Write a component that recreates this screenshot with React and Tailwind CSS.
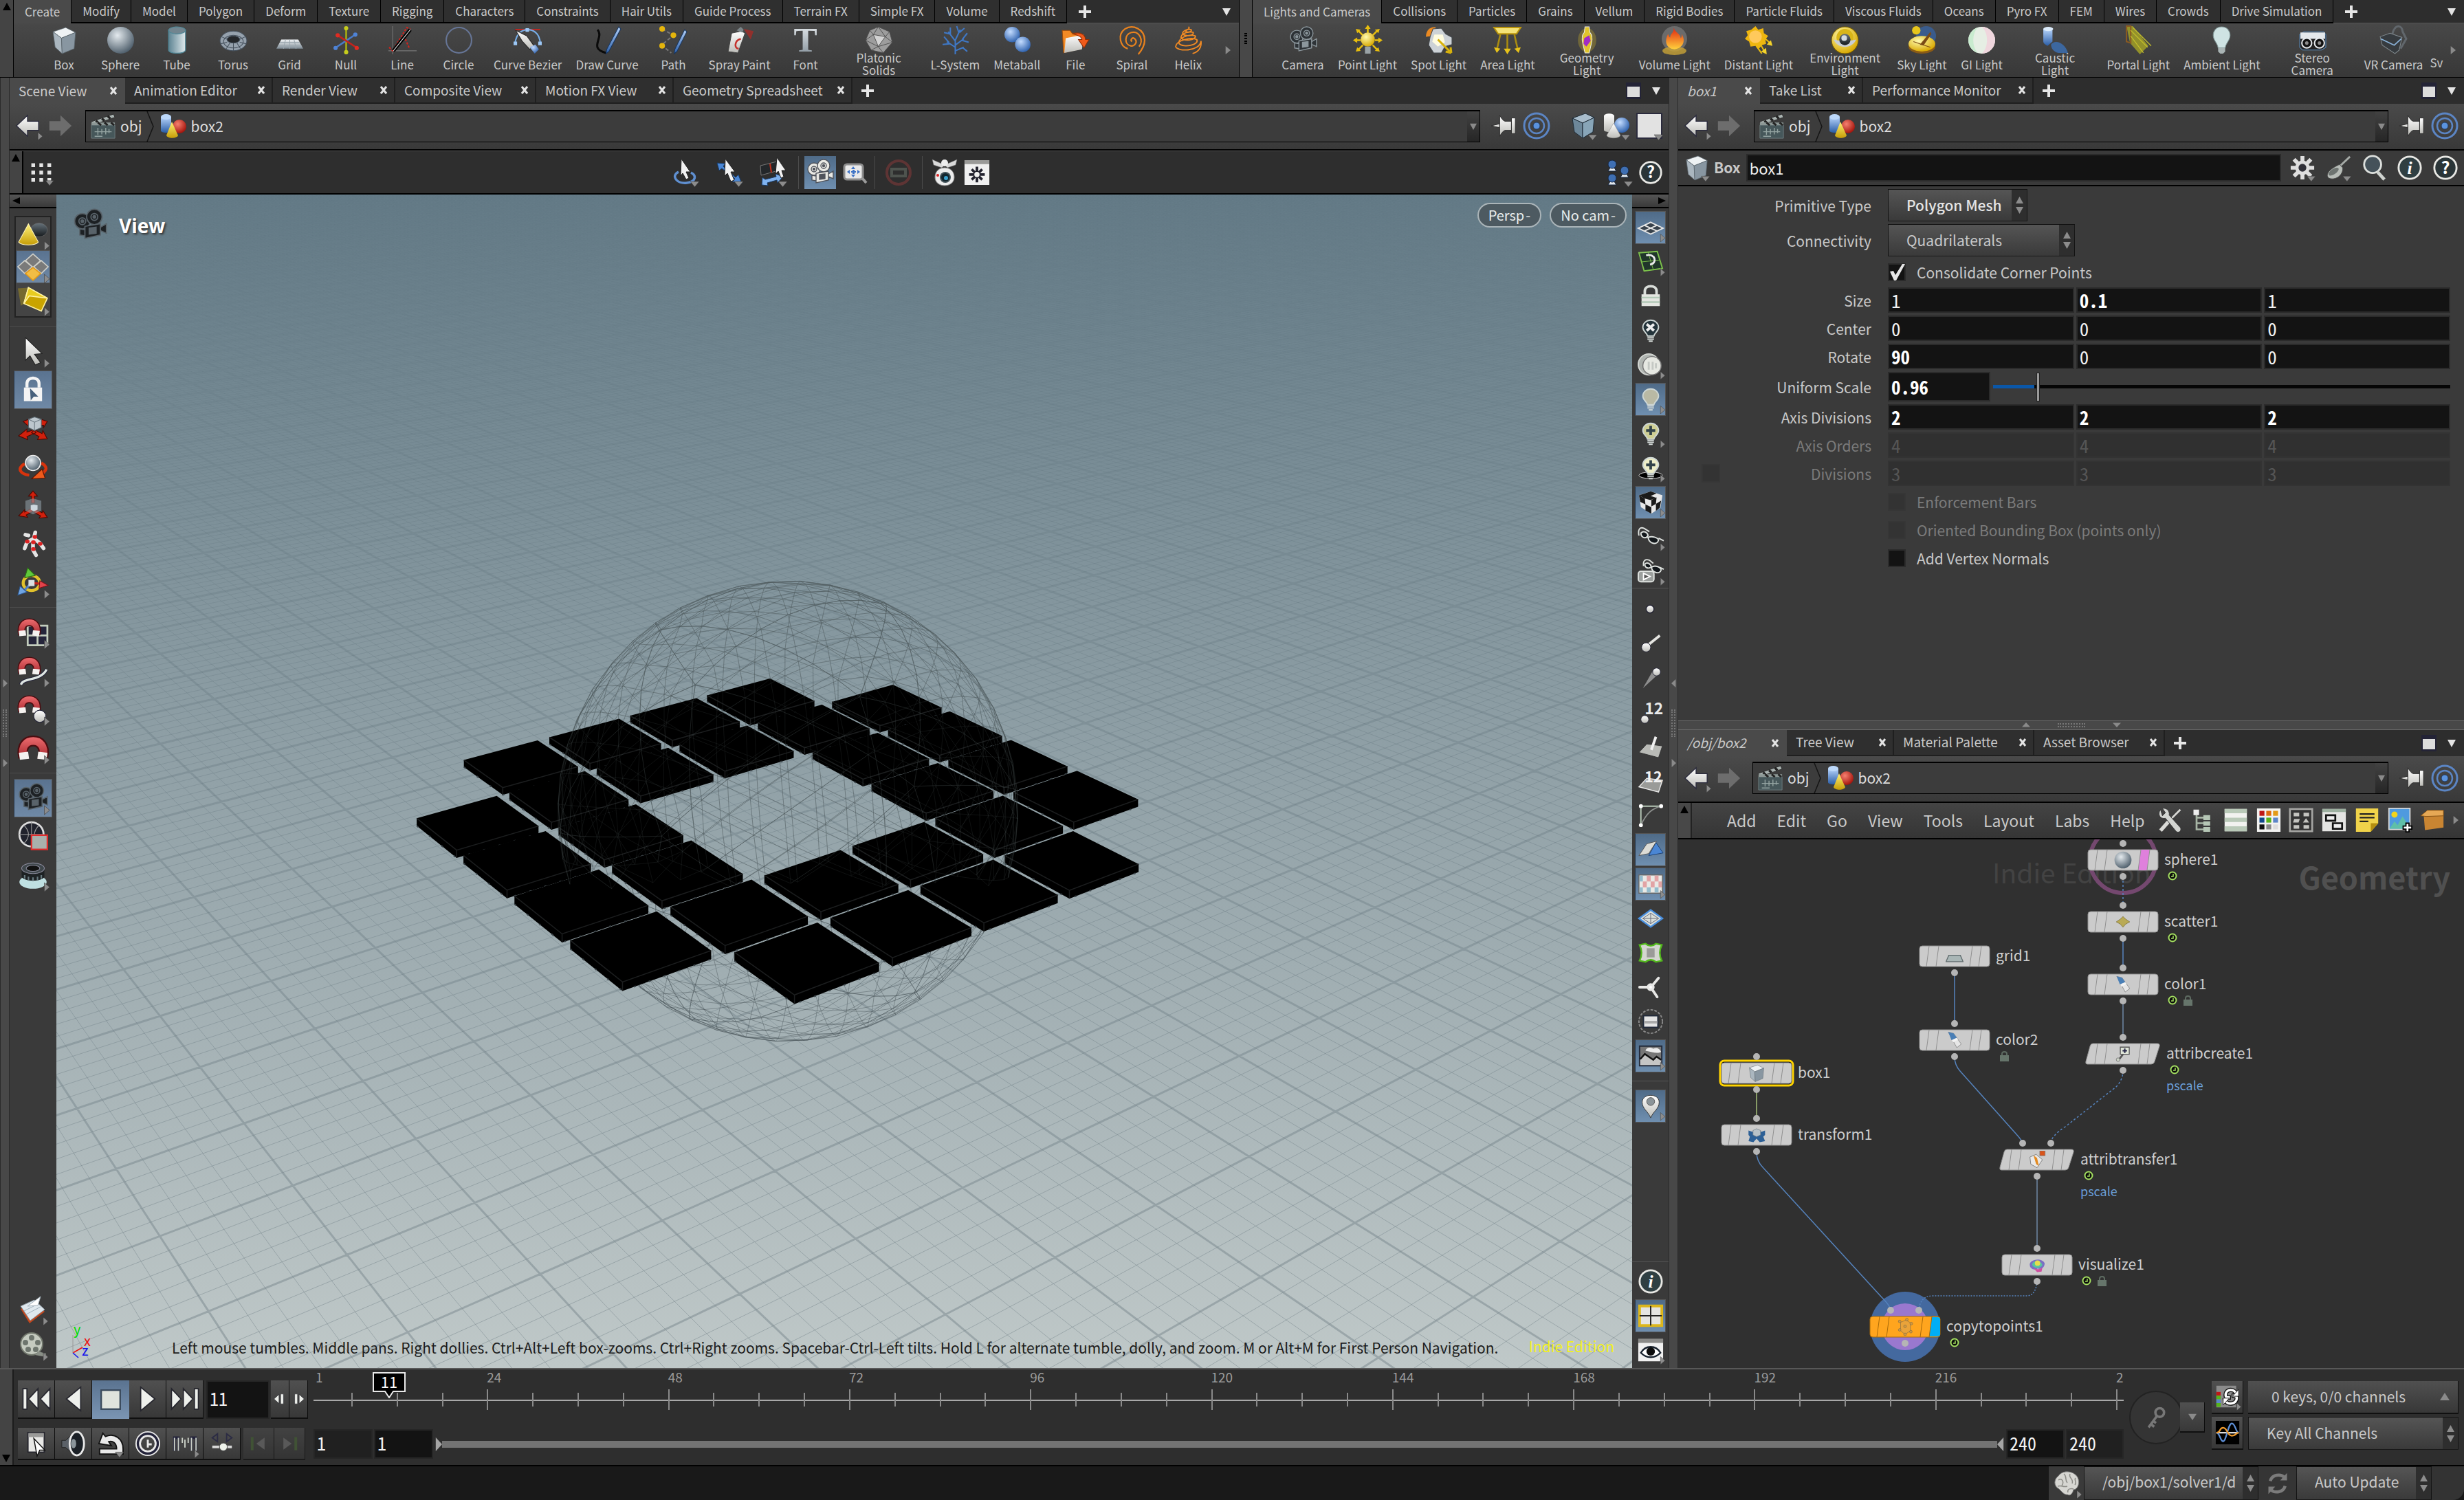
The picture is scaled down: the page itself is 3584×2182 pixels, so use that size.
import { clsx } from "clsx"

const SANS = "font-['Noto_Sans_CJK_SC','Open_Sans',sans-serif]"
const MONO = "font-['Noto_Sans_Mono_CJK_SC','Liberation_Mono',monospace]"

/* ---------- shared gradients ---------- */

function Lin({ id, from, to, x2 = 0, y2 = 1 }) {
  return (
    <linearGradient id={id} x1="0" y1="0" x2={x2} y2={y2}>
      <stop offset="0" stopColor={from} />
      <stop offset="1" stopColor={to} />
    </linearGradient>
  )
}

function Rad({ id, from, to }) {
  return (
    <radialGradient id={id} cx="0.38" cy="0.32" r="0.7">
      <stop offset="0" stopColor={from} />
      <stop offset="1" stopColor={to} />
    </radialGradient>
  )
}

function Defs() {
  return (
    <svg className="absolute size-0" aria-hidden="true">
      <defs>
        <Lin id="steel" from="#f2f5f7" to="#7d8a94" />
        <Lin id="steelH" from="#5d8392" to="#dfe9ec" x2={1} y2={0} />
        <Lin id="blueL" from="#b7d4fb" to="#2a5da6" />
        <Lin id="yellowL" from="#fff27a" to="#c79d06" />
        <Lin id="fire" from="#e2230f" to="#ffd23c" />
        <Lin id="white" from="#ffffff" to="#bdbdb8" />
        <Lin id="dark" from="#66727a" to="#15191c" />
        <Lin id="magnet" from="#ef6d70" to="#a82a30" />
        <Rad id="ball" from="#e4eaee" to="#4f5f6c" />
        <Rad id="ballBlue" from="#c3dcff" to="#2f62ae" />
        <Rad id="ballRed" from="#f58070" to="#a3130b" />
        <Rad id="ballYellow" from="#fffbb0" to="#d8a800" />
      </defs>
    </svg>
  )
}

/* ---------- icon drawings, 40 x 40 ---------- */

const bulb = (fill, inner) => (
  <g>
    <path d="M20 4c-7 0-12 5-12 11 0 6 6 8 7 13h10c1-5 7-7 7-13 0-6-5-11-12-11z" fill={fill} stroke="#cdd6d4" strokeWidth="2" />
    <path d="M15 30h10M15 33h10M17 36h6" stroke="#d8dedc" strokeWidth="2" />
    {inner}
  </g>
)

const magnet = (
  <g>
    <path
      d="M1 23C-2 9 6 2 15 2s17 7 14 21h-9c2-8 0-12-5-12s-7 4-5 12z"
      fill="url(#magnet)"
      stroke="#4a0d10"
      strokeWidth="1.5"
    />
    <path d="M1 18l9-1 1 7-9 1zM20 17l9 1-1 7-9-1z" fill="#f4f2f0" />
  </g>
)

const movieCam = (body, line) => (
  <g fill={body} stroke={line} strokeWidth="1.4">
    <circle cx="11" cy="15" r="9" />
    <circle cx="25" cy="10" r="9" />
    <circle cx="11" cy="15" r="4" />
    <circle cx="25" cy="10" r="4" />
    <circle cx="11" cy="15" r="1.5" fill={line} />
    <circle cx="25" cy="10" r="1.5" fill={line} />
    <path d="M14 21l18-3v13l-18 4zM32 22l7-4v11l-7-3zM14 25l-6-1v7l6 1z" />
    <path d="M19 23l8-1v7l-8 1z" fill={line} />
  </g>
)

const smallCube = (
  <g stroke="#59646c" strokeWidth="0.8">
    <path d="M4 8l18-6 14 7-20 8z" fill="#eef2f4" />
    <path d="M4 8l12 9 1 22L7 30z" fill="#aab6bf" />
    <path d="M16 17l20-8-2 23-17 7z" fill="#8896a1" />
  </g>
)

const arrows3 = (
  <g fill="#d1200c" stroke="#4d0903" strokeWidth="1">
    <path d="M20 1l6 7h-4v9h-4V8h-4z" />
    <path d="M1 34l8-8v3l9-5 2 4-9 5 2 3z" />
    <path d="M39 36l-11 1 2-3-9-5 2-4 9 5 1-3z" />
  </g>
)

const icons = {
  box: smallCube,
  sphere: <circle cx="20" cy="20" r="19" fill="url(#ball)" />,
  tube: (
    <g stroke="#4f8797" strokeWidth="1.2">
      <path d="M8 6v28c0 6 24 6 24 0V6z" fill="url(#steelH)" />
      <ellipse cx="20" cy="6" rx="12" ry="5" fill="#72858f" />
    </g>
  ),
  torus: (
    <g stroke="#45505c" fill="none">
      <ellipse cx="20" cy="21" rx="19" ry="14" fill="#95a1ad" />
      <ellipse cx="20" cy="22" rx="14" ry="9" />
      <path d="M3 15l9 4M37 15l-9 4M20 24v11M10 32l5-8M30 32l-5-8M2 25l9-2M38 25l-9-2" />
      <ellipse cx="20" cy="19" rx="9" ry="5" fill="#24272b" />
    </g>
  ),
  grid: (
    <g>
      <path d="M8 19h24l7 13H1z" fill="url(#steel)" />
      <path d="M6 23h28M3 28h34M14 19l-3 13M20 19v13M26 19l3 13" stroke="#9aa6ae" />
    </g>
  ),
  null: (
    <g strokeWidth="2.5">
      <path d="M20 3v34" stroke="#a8ac10" />
      <path d="M6 30L33 12" stroke="#4a7bc8" />
      <path d="M8 13l26 17" stroke="#c4231c" />
      <circle cx="20" cy="3" r="3" fill="#c6cc1d" />
      <circle cx="20" cy="37" r="3" fill="#c6cc1d" />
      <circle cx="5" cy="31" r="3" fill="#4f83d6" />
      <circle cx="33" cy="12" r="3" fill="#4f83d6" />
      <circle cx="8" cy="13" r="3" fill="#df2b22" />
      <circle cx="35" cy="31" r="3" fill="#df2b22" />
    </g>
  ),
  line: (
    <g fill="none">
      <path d="M6 0v40M0 35h40" stroke="#777" />
      <path d="M1 30l5 5L26 2l5 2M22 14l8 18" stroke="#d0231c" strokeWidth="2" strokeDasharray="3 2" />
      <path d="M7 35L31 5" stroke="#000" strokeWidth="5" />
      <path d="M7 35L31 5" stroke="#ddd" strokeWidth="1" />
    </g>
  ),
  circle: <circle cx="20" cy="20" r="18" fill="none" stroke="#667596" strokeWidth="2" />,
  bezier: (
    <g>
      <path d="M2 5h36" stroke="#d0231c" strokeWidth="1.5" />
      <path d="M2 25C4 8 14 5 20 5s17 3 18 20" fill="none" stroke="#77aee8" strokeWidth="2" />
      <path d="M3 6l16 8 10 14-6 5L12 21z" fill="url(#white)" stroke="#222" />
      <path d="M23 30l8-4 5 7-6 6z" fill="url(#ballBlue)" />
      <path d="M0 22h5v5H0zM35 22h5v5h-5zM17 3h5v5h-5z" fill="#9cc7f5" />
    </g>
  ),
  draw: (
    <g>
      <path d="M6 5c10 12-14 26 12 33" fill="none" stroke="#0a0a0a" strokeWidth="3" />
      <path d="M36 1l3 3-17 32-4 3 1-6z" fill="url(#blueL)" stroke="#16355f" />
    </g>
  ),
  path: (
    <g>
      <path d="M4 4l16 9L3 27l14 11" fill="none" stroke="#777" strokeWidth="2" strokeDasharray="5 3" />
      <circle cx="4" cy="4" r="4" fill="#e5b50c" />
      <circle cx="20" cy="13" r="4" fill="#e5b50c" />
      <circle cx="4" cy="28" r="4" fill="#e5b50c" />
      <path d="M36 5l3 3-14 28-4 3 1-6z" fill="url(#blueL)" stroke="#16355f" />
    </g>
  ),
  spray: (
    <g>
      <path d="M26 4l14 3-4 12z" fill="#c4231c" opacity="0.6" />
      <path d="M9 10l14-3 5 3-10 28-14-2z" fill="url(#white)" stroke="#444" />
      <path d="M22 18c-9 2-10 14-3 14" fill="none" stroke="#c4302b" strokeWidth="2.5" />
      <path d="M16 6l6-5 4 4-2 4z" fill="#7b8488" />
    </g>
  ),
  font: (
    <text x="20" y="36" textAnchor="middle" fontSize="50" fontWeight="bold" fill="url(#steel)" className="font-['Liberation_Serif',serif]">
      T
    </text>
  ),
  platonic: (
    <g stroke="#4c4c4c" strokeWidth="0.9">
      <path d="M19 1l16 7 4 15-13 15-17-4L1 20 7 6z" fill="#9d9d9d" />
      <path d="M12 12l17 3-10 14z" fill="#d2d2d2" />
      <path d="M19 1l-7 11L1 20l18 9 7 9M19 1l10 14 10 8-20 6-10 5M35 8l-6 7M7 6l5 6" fill="none" />
    </g>
  ),
  lsystem: (
    <path
      d="M20 40V20M20 30L8 22M20 27l12-9M20 21L10 8M20 20L27 5M12 25l-10 1M11 23L4 15M29 20l10 3M30 19l7-9M12 11L4 9M13 12l0-10M25 9l-3-9M26 9l7-6M20 35l12-5M30 30l7 6"
      fill="none"
      stroke="#3f78c6"
      strokeWidth="2"
    />
  ),
  metaball: (
    <g>
      <circle cx="13" cy="12" r="11" fill="url(#ballBlue)" />
      <circle cx="28" cy="26" r="11" fill="url(#ballBlue)" />
    </g>
  ),
  file: (
    <g>
      <path d="M1 6h11l3 4h12v22L3 38z" fill="#f28a25" stroke="#9a4a08" />
      <path d="M6 17l26-5-3 21L4 38z" fill="url(#white)" />
      <path d="M16 11c12-4 18 2 18 8h5l-7 12-8-12h5c0-4-5-6-13-8z" fill="#ef5a1b" stroke="#8f2d04" />
    </g>
  ),
  spiral: (
    <path
      d="M20 22c-3-3 1-7 4-4 5 5-1 11-6 10-9-2-9-16 1-19 12-3 18 12 11 20M14 32C3 29-1 12 10 4c11-7 28 0 28 16 0 8-4 14-9 20"
      fill="none"
      stroke="#e8821e"
      strokeWidth="2.2"
    />
  ),
  helix: (
    <path
      d="M20 1c4 3-3 4-4 6 3 4 10 0 8-2-6-2-13 3-12 6 4 4 16 3 15-2-8-3-19 3-17 8 4 5 21 3 20-3-10-4-26 4-23 11 6 6 29 2 25-6-8-4-29 1-30 10 1 7 34 8 36-8 1 9-3 15-12 18"
      fill="none"
      stroke="#f08a24"
      strokeWidth="1.8"
    />
  ),
  camera: movieCam("#2d3236", "#8b969c"),
  cameraBig: movieCam("#1d2124", "#59636a"),
  cameraLight: movieCam("#e9e9e4", "#50545c"),
  pointlight: (
    <g>
      <path d="M20 2v8M2 20h8M30 20h8M7 7l6 6M33 7l-6 6M7 33l6-6M33 33l-6-6" stroke="#e7bd0e" strokeWidth="2.5" />
      <path d="M20-2l4 6h-8zM-1 20l6-4v8zM41 20l-6-4v8zM3 4l7 1-5 5zM37 4l-7 1 5 5zM3 36l7-1-5-5zM37 36l-7-1 5-5z" fill="#e7bd0e" />
      <circle cx="20" cy="19" r="10" fill="url(#ballYellow)" />
      <path d="M16 29h8v10h-8z" fill="#9aa3a6" />
    </g>
  ),
  spotlight: (
    <g>
      <path d="M2 15C2 5 10 0 16 2l-4 12z" fill="#ea8a22" />
      <path d="M12 4l12-1 6 8 9 5v10l-10 3-5 9H13L6 27l2-12z" fill="#cdd2d6" stroke="#43484d" />
      <path d="M14 12l12 0 3 11-10 6-8-7z" fill="#fffce0" />
      <path d="M19 19l17 17M38 38l-1-8M38 38l-8-2" stroke="#d8b20c" strokeWidth="3" />
    </g>
  ),
  arealight: (
    <g>
      <path d="M1 2h38l-6 9H7z" fill="#f4e277" stroke="#b9940c" strokeWidth="2" />
      <path d="M10 12L5 34M20 12v24M30 12l5 22" stroke="#a98c10" strokeWidth="2.5" />
      <path d="M1 30l4 8 5-6zM15 32l5 8 5-8zM30 32l6 6 3-8z" fill="#e7c21a" />
    </g>
  ),
  geolight: (
    <g>
      <ellipse cx="20" cy="20" rx="13" ry="17" fill="#8d7f35" opacity="0.6" />
      <path d="M17 1h6l1 8c5 5 3 12 2 16l-3 13h-6l-3-13c-1-4-3-11 2-16z" fill="#e0c42c" stroke="#ececec" />
      <path d="M16 17l7-4 2 8-6 8-4-4z" fill="#a12cc4" />
    </g>
  ),
  fire: (
    <g>
      <circle cx="20" cy="18" r="18" fill="#6b6b6b" />
      <ellipse cx="20" cy="35" rx="17" ry="6" fill="#c9a437" opacity="0.8" />
      <path d="M19 2c2 8 9 8 10 15 1-1 2-3 1-6 6 8 4 20-10 22C7 31 6 21 11 11c1 3 2 5 3 5 0-6 6-6 5-14z" fill="url(#fire)" />
    </g>
  ),
  distant: (
    <g>
      <path d="M16 0l4 5 7-2 1 7 6 4-4 5 1 6-6 2-4 5-5-4-7 1-2-7-6-4 4-5-2-6 7-2z" fill="#efb60f" />
      <circle cx="16" cy="15" r="9" fill="#ffc95c" />
      <path d="M29 17l10 9M22 24l8 14M17 28l8 11" stroke="#e9bb10" strokeWidth="2" />
      <path d="M40 28l-8-2 6-6zM32 40l-8-4 7-5z" fill="#f3d22b" />
    </g>
  ),
  environment: (
    <g>
      <circle cx="20" cy="20" r="19" fill="url(#ballYellow)" stroke="#745c04" />
      <circle cx="20" cy="16" r="12" fill="#d8b518" />
      <path d="M4 19c6 14 26 14 32 0l-10 2H14z" fill="#c9ced3" />
      <circle cx="20" cy="19" r="8" fill="url(#dark)" />
      <circle cx="19" cy="17" r="4" fill="#d3dbe0" />
    </g>
  ),
  sky: (
    <g>
      <circle cx="26" cy="14" r="14" fill="#37629f" opacity="0.8" />
      <circle cx="12" cy="6" r="6" fill="#e7c51c" />
      <ellipse cx="20" cy="29" rx="19" ry="10" fill="#8a5b16" />
      <ellipse cx="20" cy="25" rx="19" ry="11" fill="url(#ballYellow)" />
      <path d="M18 26L32 9l1 2-11 16zM8 22l12 4 12 4" fill="#7a4a15" stroke="#7a4a15" />
    </g>
  ),
  gi: (
    <g>
      <circle cx="20" cy="20" r="19" fill="#e6eee4" />
      <path d="M20 1a19 19 0 010 38c10-8 10-30 0-38z" fill="#efd6dd" />
      <path d="M14 2a19 19 0 000 36c-8-10-8-26 0-36z" fill="#c9ebcf" />
    </g>
  ),
  caustic: (
    <g>
      <path d="M14 26c6-8 20-2 24 12H24c-6-2-10-6-10-12z" fill="#3b78c8" opacity="0.7" />
      <path d="M3 4v18c0 3 4 5 6 6l7-6V4z" fill="url(#blueL)" />
      <ellipse cx="10" cy="4" rx="7" ry="3" fill="#dcebfb" />
    </g>
  ),
  portal: (
    <g>
      <path d="M3 0h9l22 28-12 12-14-16z" fill="#93912a" />
      <path d="M3 0v22l6 2V0z" fill="none" stroke="#8a5a22" strokeWidth="2" />
      <path d="M9 6l24 24M9 14l18 24M12 2l26 26" stroke="#c6c02c" strokeWidth="1.2" />
    </g>
  ),
  ambient: (
    <g>
      <path d="M20 1C12 1 8 7 8 13c0 8 6 10 7 18h10c1-8 7-10 7-18 0-6-4-12-12-12z" fill="#cfe3e3" stroke="#7d9292" />
      <path d="M15 31h10v5l-3 3h-4l-3-3z" fill="#a9b4b4" />
    </g>
  ),
  stereo: (
    <g>
      <path d="M2 12l6-4h28l3 4v18l-6 4H6l-4-4z" fill="#222" stroke="#5b8fc0" />
      <path d="M3 9h35v9H3z" fill="#e4e8eb" />
      <circle cx="12" cy="24" r="7" fill="#111" stroke="#e4e8eb" strokeWidth="2" />
      <circle cx="30" cy="24" r="7" fill="#111" stroke="#e4e8eb" strokeWidth="2" />
      <circle cx="12" cy="24" r="2.5" fill="#8b8b8b" />
      <circle cx="30" cy="24" r="2.5" fill="#8b8b8b" />
    </g>
  ),
  vr: (
    <g>
      <path d="M18 12C22-4 32-2 33 8l5 10-8 14" fill="none" stroke="#61676c" strokeWidth="3" />
      <path d="M1 15l14-5 17 6-4 18-6 5L4 27z" fill="#363b3f" stroke="#828b90" />
      <path d="M2 18l19 9 10-9" fill="none" stroke="#8ab3da" strokeWidth="1.6" />
    </g>
  ),

  /* path bar */
  back: <path d="M2 20L19 4v9h17v14H19v9z" fill="url(#white)" stroke="#2a2a3c" strokeWidth="1.5" />,
  forward: <path d="M38 20L21 4v9H4v14h17v9z" fill="#6d6d6d" />,
  clapper: (
    <g>
      <path d="M1 13L36 1l2 5L6 17z" fill="#aab3b1" stroke="#2b2b2b" />
      <path d="M9 11l4 4M18 8l4 3M27 4l4 4" stroke="#222" strokeWidth="3.5" />
      <path d="M2 18h36v20H2z" fill="#46575a" stroke="#6d7b7d" />
      <path d="M2 14h36v4H2z" fill="#8d9896" />
      <path d="M12 14l5 4M22 14l5 4M32 14l5 4" stroke="#222" strokeWidth="3" />
      <path d="M7 28h26M12 22v11M18 24v8M24 22v10M29 24v6M7 35h12" stroke="#93a3a1" strokeWidth="1.5" />
    </g>
  ),
  geo: (
    <g>
      <path d="M2 6v20c0 4 15 4 15 0V6z" fill="url(#blueL)" />
      <ellipse cx="9.500" cy="6" rx="7.500" ry="4" fill="#bcd8fa" />
      <circle cx="29" cy="20" r="10" fill="url(#ballRed)" />
      <path d="M18 13l9 20c-2 5-15 5-17 0z" fill="url(#yellowL)" />
    </g>
  ),
  pin: (
    <g fill="url(#white)" stroke="#2a2a2a">
      <path d="M0 20l13-3v6z" />
      <path d="M13 4c3 5 5 8 8 9h10v14H21c-3 1-5 4-8 9z" />
      <path d="M31 8h6v24h-6z" />
    </g>
  ),
  target: (
    <g fill="none" stroke="#5b85c4">
      <circle cx="20" cy="20" r="18" strokeWidth="3" />
      <circle cx="20" cy="20" r="11" strokeWidth="2.5" />
      <circle cx="20" cy="20" r="5" fill="#5b93dd" stroke="#1f3a63" />
    </g>
  ),
  cubeBlue: (
    <g stroke="#1e2b36">
      <path d="M4 9l19-7 13 6-17 8z" fill="#a8bccb" />
      <path d="M4 9l15 7v22L7 29z" fill="#6d8799" />
      <path d="M19 16l17-8-2 21-15 9z" fill="#88a5b8" />
    </g>
  ),
  shapes: (
    <g>
      <path d="M2 6v20c0 4 15 4 15 0V6c0-5-15-5-15 0z" fill="url(#white)" />
      <circle cx="28" cy="19" r="11" fill="url(#ballBlue)" />
      <path d="M16 16l10 18c-2 5-18 5-20 0z" fill="url(#white)" stroke="#888" strokeWidth="0.5" />
    </g>
  ),
  whiteRect: <rect x="2" y="2" width="36" height="36" fill="#e2e2e2" stroke="#2a2a3c" strokeWidth="2" />,

  /* viewport toolbar */
  dots9: <path d="M4 5h6v6H4zM17 5h6v6h-6zM30 5h6v6h-6zM4 17h6v6H4zM17 17h6v6h-6zM30 17h6v6h-6zM4 29h6v6H4zM17 29h6v6h-6zM30 29h6v6h-6z" fill="#e4e4e4" />,
  orbit: (
    <g>
      <path d="M10 19c-12 6-2 18 12 16 14-2 14-11 6-15" fill="none" stroke="#5f8fd0" strokeWidth="3.500" />
      <path d="M14 0l13 19h-6l4 9-4 2-5-9-3 4z" fill="#f2f2f2" stroke="#222" />
    </g>
  ),
  pan: (
    <g>
      <path d="M2 6l12 1-3 4 18 16 4-4 5 13-14-3 4-4L9 14l-4 3z" fill="#4a86d4" stroke="#173a66" />
      <path d="M14 0l14 19h-6l5 12-5 2-5-12-4 4z" fill="#f2f2f2" stroke="#222" />
    </g>
  ),
  dolly: (
    <g>
      <path d="M1 10l24-6 2 13L2 24z" fill="#23272a" stroke="#777" />
      <path d="M15 7l2 13" stroke="#c0301c" strokeWidth="2" />
      <path d="M3 38l1-11 4 3 16-4-1-4 11 4-8 9-1-4-14 4 1 4z" fill="#7fb2ef" stroke="#173a66" />
      <path d="M25-2l13 19h-6l3 9-4 2-4-10-4 4z" fill="#f2f2f2" stroke="#222" />
    </g>
  ),
  region: (
    <g>
      <rect x="4" y="8" width="27" height="22" rx="4" fill="#e9e9e9" stroke="#8d8d8d" strokeWidth="3" />
      <path d="M17 11l3 4h-6zM17 27l3-4h-6zM8 19l4-3v6zM27 19l-4-3v6zM14 18h7v2h-7zM16 16h3v6h-3z" fill="#3f74c6" />
      <path d="M30 28l6 7" stroke="#9a9a9a" strokeWidth="4" />
    </g>
  ),
  forbidden: (
    <g fill="none">
      <circle cx="20" cy="20" r="17" stroke="#5e3434" strokeWidth="4" />
      <rect x="10" y="15" width="20" height="10" stroke="#4e534e" strokeWidth="4" />
    </g>
  ),
  bug: (
    <g>
      <path d="M20 9L2 1l2 8 12 4zM20 9l18-8-2 8-12 4z" fill="#d9d9d9" stroke="#666" strokeWidth="0.500" />
      <circle cx="20" cy="6" r="5" fill="#eee" />
      <path d="M20 13C10 13 6 20 6 27c0 7 6 12 14 12s14-5 14-12c0-7-4-14-14-14z" fill="#ececec" stroke="#888" />
      <circle cx="21" cy="27" r="8" fill="#44545a" />
      <circle cx="21" cy="27" r="6" fill="#12262e" />
      <circle cx="22" cy="28" r="3" fill="#3aa0cc" />
      <circle cx="10" cy="24" r="2" fill="#d22" />
    </g>
  ),
  gearSheet: (
    <g>
      <path d="M1 1h38v38H1z" fill="#f0f0f0" />
      <path d="M1 1h38v6H1z" fill="#9a9a98" />
      <path d="M20 11v24M8 23h24M12 15l16 16M28 15L12 31" stroke="#20202c" strokeWidth="4" />
      <circle cx="20" cy="23" r="4" fill="#f0f0f0" />
    </g>
  ),
  users: (
    <g fill="#3f6fb2" stroke="#16263f">
      <path d="M4 18l3-5h6l3 5zM4 38l3-5h6l3 5zM22 27l3-5h6l3 5z" fill="#e4e9ee" />
      <circle cx="10" cy="8" r="6" />
      <circle cx="10" cy="28" r="6" />
      <circle cx="28" cy="17" r="6" />
    </g>
  ),
  help: (
    <g>
      <circle cx="20" cy="20" r="17" fill="#2a3538" stroke="#e8e8e4" strokeWidth="3" />
      <text x="20" y="29" textAnchor="middle" fontSize="26" fontWeight="bold" fill="#fff">?</text>
    </g>
  ),
  info: (
    <g>
      <circle cx="20" cy="20" r="17" fill="#2f3f42" stroke="#e8e8e4" strokeWidth="3" />
      <text x="20" y="29" textAnchor="middle" fontSize="27" fontWeight="bold" fontStyle="italic" fill="#fff" className="font-['Liberation_Serif',serif]">i</text>
    </g>
  ),

  /* left tools */
  objSelect: (
    <g>
      <ellipse cx="28" cy="15" rx="11" ry="9" fill="url(#dark)" stroke="#777" strokeWidth="0.500" />
      <path d="M14 7l13 24c-4 5-22 5-26 0z" fill="url(#yellowL)" stroke="#fff3b8" />
    </g>
  ),
  primSelect: (
    <g stroke="#cfcfc8" strokeWidth="1.5">
      <path d="M20 3l10 9-10 9-10-9z" fill="#7a7a7a" />
      <path d="M9 12l10 8-10 9-9-9z" fill="#7a7a7a" />
      <path d="M31 12l9 8-9 9-10-9z" fill="#7a7a7a" />
      <path d="M20 21l10 8-10 9-10-9z" fill="#f2bd45" stroke="#e39a18" />
    </g>
  ),
  cubeYellow: (
    <g>
      <path d="M0 5l14-1-4 20-6 4z" fill="#a8901a" opacity="0.5" />
      <path d="M14 4l25 14-8 17L8 25z" fill="#c9a400" stroke="#fff2a0" strokeWidth="1.500" />
      <path d="M14 4l25 14-24-3-7 10z" fill="#e8cc20" stroke="#fff2a0" strokeWidth="1.500" />
    </g>
  ),
  cursor: <path d="M10 2l22 21-10 1 8 11-7 3-7-12-6 6z" fill="url(#white)" stroke="#222" />,
  secure: (
    <g>
      <path d="M12 17v-5c0-10 16-10 16 0v5" fill="none" stroke="#f4f4f4" strokeWidth="4" />
      <path d="M8 17h24v18H8z" fill="#f4f4f4" />
      <path d="M16 18l11 11h-6l-4 5z" fill="#46607c" />
    </g>
  ),
  move: (
    <g>
      <path d="M1 30l11-9v4l9-3 3 4-12 5 1 4zM39 34l-13 1 2-4-10-5 4-4 10 5 1-4zM7 11l10-4v3l5-1v5l-7 1v3zM39 11l-9-3v3l-4 1 2 4 6 0v3z" fill="#d1200c" stroke="#4d0903" />
      <path d="M14 8l8-3 9 3v11l-9 4-8-4z" fill="#bcc6cd" stroke="#56636b" />
      <path d="M14 8l8 4 9-4M22 12v11" stroke="#6d7a83" fill="none" />
    </g>
  ),
  rotate: (
    <g>
      <path d="M9 16c-12 7-4 14 6 15M31 15c9 5 7 10 1 14" fill="none" stroke="#d8330c" strokeWidth="4" />
      <path d="M18 36l14-13 4 12z" fill="#ef5a1b" stroke="#5c1300" />
      <circle cx="20" cy="15" r="10" fill="url(#ball)" stroke="#eee" strokeWidth="1.5" />
    </g>
  ),
  scale: (
    <g>
      {arrows3}
      <path d="M10 14l10-3 11 3v13l-11 5-10-5z" fill="#8c9aa2" opacity="0.6" />
      <path d="M17 20l4-1 5 1v6l-5 2-4-2z" fill="#cdd7dd" />
    </g>
  ),
  pose: (
    <g stroke="#e4e4e4" strokeWidth="5" strokeLinecap="round">
      <path d="M10 8l4 1M23 5l-2 8 8 6 5 7M21 13l-9 5-3 8M20 20l0 8 4 7" fill="none" />
      <path d="M22 11h1M12 17h1M20 18h1M29 20h1M20 27h1" stroke="#d22" />
    </g>
  ),
  handles: (
    <g>
      <ellipse cx="18" cy="21" rx="11" ry="10" fill="none" stroke="#e1c12c" strokeWidth="4" />
      <path d="M18 21L9 30" stroke="#5580c0" strokeWidth="3" />
      <path d="M18 21l12 1" stroke="#c4231c" strokeWidth="3" />
      <path d="M13 1l10 10-14 3z" fill="#5fc93a" stroke="#2c6d16" />
      <path d="M0 37l3-12 9 8z" fill="#6fa5e4" stroke="#2c558c" />
      <path d="M40 24l-11-6-1 10z" fill="#e2434b" stroke="#7c1218" />
      <path d="M14 17h8v8h-8z" fill="#d9dfe2" />
    </g>
  ),
  snapGrid: (
    <g>
      <path d="M13 11h26v26H13zM26 11v26M13 24h26" fill="#25253a" stroke="#c3cdbd" strokeWidth="2.5" />
      {magnet}
    </g>
  ),
  snapCurve: (
    <g>
      {magnet}
      <path d="M4 38c4-10 26-4 34-20" fill="none" stroke="#25253a" strokeWidth="5" />
      <path d="M4 38c4-10 26-4 34-20" fill="none" stroke="#dfe6e2" strokeWidth="3" />
    </g>
  ),
  snapPoint: (
    <g>
      {magnet}
      <circle cx="29" cy="29" r="8" fill="url(#white)" stroke="#25253a" />
    </g>
  ),
  snap: <g transform="translate(0 2) scale(1.35)">{magnet}</g>,
  globe: (
    <g>
      <circle cx="18" cy="17" r="16" fill="#20222c" stroke="#ddd" strokeWidth="2.5" />
      <path d="M2 17h32M18 1v32M8 5c8 8 8 16 0 24M28 5c-8 8-8 16 0 24" fill="none" stroke="#999" />
      <path d="M18 18h21v19H18z" fill="#a9b0ac" stroke="#e02d2d" strokeWidth="2" />
    </g>
  ),
  lens: (
    <g>
      <ellipse cx="20" cy="29" rx="18" ry="9" fill="#bfe0e2" />
      <path d="M5 12v10c2 7 28 7 30 0V12z" fill="#1d2123" />
      <ellipse cx="20" cy="11" rx="15" ry="7" fill="#3f474b" stroke="#889" />
      <ellipse cx="20" cy="11" rx="9" ry="4" fill="#111" stroke="#889" />
      <path d="M9 20v5M14 22v5M20 23v5M26 22v5M31 20v5" stroke="#66787e" strokeWidth="2" />
    </g>
  ),
  book: (
    <g>
      <path d="M2 18l20-10 15 14-22 17z" fill="#c4461b" />
      <path d="M2 14l20-9 15 14-21 16z" fill="#dfe8ee" stroke="#8a969e" />
      <path d="M7 21l20-10M10 26l21-11" stroke="#9fb0bb" />
      <path d="M12 14L31 0l-4 13z" fill="#fff" stroke="#a5b3bd" />
    </g>
  ),
  reel: (
    <g>
      <circle cx="18" cy="17" r="16" fill="#c5cbc0" stroke="#70766b" strokeWidth="2" />
      <path d="M28 28l11 3v5l-16-3z" fill="#8a9087" />
      <g fill="#6d756d">
        <circle cx="18" cy="8" r="4" />
        <circle cx="9" cy="15" r="4" />
        <circle cx="27" cy="15" r="4" />
        <circle cx="13" cy="25" r="4" />
        <circle cx="24" cy="25" r="4" />
      </g>
    </g>
  ),

  /* display options */
  plane: (
    <g stroke="#e6e6e6" strokeWidth="2" fill="#38424c">
      <path d="M20 12l19 9-19 9L1 21z" />
      <path d="M10 16.500l20 9M30 16.500l-20 9" />
    </g>
  ),
  planeC: (
    <g fill="none">
      <path d="M2 6l28-2 8 26-28 4z" fill="#20362a" stroke="#7cc24b" strokeWidth="2" />
      <path d="M16 5l8 27M6 20l28-3" stroke="#7cc24b" />
      <path d="M13 10c14-4 18 12 6 14" stroke="#e9e9e9" strokeWidth="3" />
    </g>
  ),
  lock: (
    <g>
      <path d="M11 18v-6c0-10 18-10 18 0v6" fill="none" stroke="#d9ddd9" strokeWidth="4" />
      <path d="M6 17h28v18H6z" fill="#e4e6e1" />
      <path d="M6 22h28M6 29h28" stroke="#b3c9b8" strokeWidth="2.5" />
    </g>
  ),
  bulbX: bulb("#23333a", <path d="M14 10l11 10M25 10L14 20" stroke="#eee" strokeWidth="4" />),
  headlight: (
    <g>
      <circle cx="17" cy="19" r="16" fill="#b0b5b1" stroke="#d5d8d4" strokeWidth="2" />
      <circle cx="22" cy="21" r="14" fill="#e6e8e2" stroke="#777" strokeWidth="1.500" />
      <path d="M17 15v12M23 15v12M28 17v8" stroke="#c4c8c3" strokeWidth="3" />
    </g>
  ),
  bulb: bulb("#b9b9a4"),
  bulbPlus: bulb("#cfcf94", <path d="M20 8v14M13 15h14" stroke="#33434a" strokeWidth="4" />),
  bulbFloor: (
    <g>
      <ellipse cx="20" cy="31" rx="18" ry="5" fill="#000" stroke="#ddd" />
      {bulb("#eeeec8", <path d="M20 8v14M13 15h14" stroke="#33434a" strokeWidth="4" />)}
    </g>
  ),
  checker: (
    <g>
      <path d="M2 9l18-6 18 6-3 19-14 9L5 27z" fill="#e8e8e8" />
      <path d="M2 9l9-3 9 4-9 4zM20 3l9 3-9 4-9-4zM29 13l-9 3-1 0-8-2 9-4z" fill="#1a1a1a" />
      <path d="M2 9l9 5 1 9-8-4zM12 23l9 4v10l-9-5zM21 16l8-4-1 10-7 4zM28 22l8-5-2 11-6 5z" fill="#1a1a1a" />
    </g>
  ),
  glasses: (
    <g fill="none" stroke="#dfe3e0" strokeWidth="2">
      <path d="M2 18C0 8 4 4 10 7l8 5M32 22l8 4" />
      <path d="M5 14c4-4 10-1 11 4-4 6-11 3-11-4zM16 21c6-3 15 0 16 4-2 8-14 6-16-4z" fill="#12171b" />
    </g>
  ),
  glassesPlay: (
    <g fill="none" stroke="#dfe3e0" strokeWidth="2">
      <rect x="1" y="20" width="24" height="16" rx="4" fill="#9b9f9d" />
      <path d="M9 23l10 5-10 5z" fill="#555" stroke="#fff" />
      <path d="M9 12C8 3 12 1 18 3l6 5M34 14l6 3" />
      <path d="M11 9c4-4 9 0 10 4-4 4-10 2-10-4zM21 14c5-4 14-1 15 4-2 7-13 5-15-4z" fill="#12171b" />
    </g>
  ),
  dot: <circle cx="19" cy="20" r="6" fill="url(#white)" stroke="#223" strokeWidth="1.5" />,
  pointNormal: (
    <g>
      <path d="M14 24L34 8" stroke="#e6e6e2" strokeWidth="4" />
      <circle cx="13" cy="26" r="7" fill="url(#white)" stroke="#223" />
    </g>
  ),
  trail: (
    <g>
      <path d="M8 36L24 8l8 6z" fill="#8f8f8f" />
      <circle cx="29" cy="11" r="6" fill="url(#white)" stroke="#223" />
    </g>
  ),
  pointNum: (
    <g>
      <circle cx="11" cy="31" r="6" fill="url(#white)" stroke="#223" />
      <text x="25" y="23" textAnchor="middle" fontSize="24" fontWeight="bold" fill="#e9e9e9">12</text>
    </g>
  ),
  primNormal: (
    <g>
      <path d="M14 16l24 3-6 18L2 29z" fill="#b9bab6" stroke="#333" />
      <path d="M21 25L28 5" stroke="#f0f0f0" strokeWidth="4" />
    </g>
  ),
  primNum: (
    <g>
      <path d="M14 16l24 3-6 18L2 29z" fill="#9a9b98" stroke="#e8e8e8" strokeWidth="1.5" />
      <text x="24" y="22" textAnchor="middle" fontSize="23" fontWeight="bold" fill="#f2f2f2">12</text>
    </g>
  ),
  hull: (
    <g fill="none" strokeWidth="2">
      <path d="M5 35V6h31" stroke="#b8c9b8" />
      <path d="M5 35C14 16 22 10 36 6" stroke="#8c8f8d" />
      <circle cx="5" cy="6" r="3" fill="#fff" />
      <circle cx="36" cy="6" r="3" fill="#fff" />
      <circle cx="5" cy="35" r="3" fill="#fff" />
    </g>
  ),
  ghost: (
    <g>
      <path d="M17 29l11-20 11 16z" fill="#4a86d4" stroke="#1a3f73" />
      <path d="M2 29L14 11l15-4-12 19z" fill="#dcdcd6" stroke="#555" />
    </g>
  ),
  uv: (
    <g>
      <path d="M2 6h36v28H2z" fill="#e9e9e6" stroke="#666" strokeWidth="1.5" />
      <path d="M14 7h6v9h-6zM26 7h6v9h-6zM8 16h6v9H8zM20 16h6v9h-6zM32 16h5v9h-5z" fill="#e2a3a5" />
      <path d="M3 7h5v9H3zM14 25h6v8h-6zM3 25h5v8H3zM26 25h6v8h-6z" fill="#94bccd" />
    </g>
  ),
  diamond: (
    <g>
      <path d="M20 7l18 13-18 13L2 20z" fill="#dadfda" stroke="#4a90e0" strokeWidth="2.5" />
      <path d="M8 20l12-8 12 8-12 8zM20 12v16M8 20h24" fill="none" stroke="#667" />
    </g>
  ),
  green: (
    <g>
      <path d="M3 8l9-2c5 4 11 4 16 0l9 2c-4 8-4 16 0 24l-9 2c-5-4-11-4-16 0l-9-2c4-8 4-16 0-24z" fill="#d4d6d0" stroke="#52b81c" strokeWidth="2.500" />
      <path d="M14 13h12v14H14z" fill="#9a9a98" />
    </g>
  ),
  tripod: (
    <g stroke="#e8e8e6" strokeWidth="4" strokeLinecap="round">
      <path d="M19 20H3M22 18l10-12M22 23l8 12" />
      <circle cx="20" cy="20" r="4" fill="#fff" />
    </g>
  ),
  overlay: (
    <g>
      <circle cx="20" cy="20" r="18" fill="none" stroke="#8a8a8a" strokeWidth="2" strokeDasharray="4 2" />
      <path d="M9 11h22v18H9z" fill="#e4e4e4" stroke="#222a3a" strokeWidth="2" />
      <path d="M10 19h20v4H10z" fill="#a9a9a9" />
    </g>
  ),
  landscape: (
    <g>
      <path d="M3 5h34v30H3z" fill="#777" stroke="#222a3a" strokeWidth="2" />
      <path d="M12 12c2-6 9-5 12-3 6-3 10 0 12 5-6 3-14 0-24-2z" fill="#ececec" />
      <path d="M4 25l7-8 13 9 5-5 7 5v8H4z" fill="#c5c5c5" />
      <path d="M4 25l7-8 13 9 5-5 7 5" fill="none" stroke="#111" strokeWidth="2.500" />
    </g>
  ),
  marker: (
    <g>
      <path d="M20 38C16 28 7 24 7 14 7 0 33 0 33 14c0 10-9 14-13 24z" fill="url(#white)" stroke="#333" />
      <circle cx="20" cy="13" r="6" fill="#8b9499" stroke="#555" />
    </g>
  ),
  quad: (
    <g>
      <path d="M3 5h34v30H3z" fill="#e4e4e2" stroke="#dcb61c" strokeWidth="4" />
      <path d="M20 5v30M3 20h34" stroke="#222" strokeWidth="2" />
    </g>
  ),
  eye: (
    <g>
      <path d="M1 3h38v34H1z" fill="#f0f0f0" />
      <path d="M1 3h38v6H1z" fill="#8a8a88" />
      <path d="M5 24c7-12 23-12 30 0-8 9-22 9-30 0z" fill="#fff" stroke="#16202c" strokeWidth="2.500" />
      <circle cx="20" cy="22" r="6.500" fill="#0c0c0c" />
    </g>
  ),

  /* parameter header */
  gear: (
    <g>
      <path d="M20 2v36M2 20h36M7 7l26 26M33 7L7 33" stroke="#dedede" strokeWidth="6" />
      <circle cx="20" cy="20" r="11" fill="#dedede" />
      <circle cx="20" cy="20" r="6" fill="#303038" />
    </g>
  ),
  brush: (
    <g>
      <path d="M20 20L38 3" stroke="#a5aaa6" strokeWidth="3" />
      <path d="M22 15l5 5c1 12-12 20-21 16-6-4-2-13 16-21z" fill="#b8bdb8" stroke="#444" />
      <ellipse cx="13" cy="26" rx="9" ry="4" transform="rotate(-35 13 26)" fill="#6e7471" />
    </g>
  ),
  search: (
    <g>
      <circle cx="18" cy="15" r="13" fill="#45525a" stroke="#dcdfdc" strokeWidth="3" />
      <path d="M25 26l11 12" stroke="#cfd3cf" strokeWidth="5" />
    </g>
  ),

  /* network menu */
  tools: (
    <g>
      <path d="M4 37l15-17" stroke="#d9d9d6" strokeWidth="6" />
      <path d="M18 21L36 3" stroke="#d9d9d6" strokeWidth="3" />
      <path d="M4 3c-6 8 0 16 8 14l17 21c4 4 10-1 7-6L18 12c1-8-5-12-11-11l5 7-5 5z" fill="#d2d4d1" stroke="#333" />
    </g>
  ),
  tree: (
    <g>
      <path d="M10 12v23h12M10 16h12M10 25h12" fill="none" stroke="#a7b5a5" strokeWidth="3" />
      <path d="M5 3h9v9H5z" fill="#eee" />
      <path d="M21 12h11v8H21zM21 22h11v7H21zM21 31h11v8H21z" fill="#b5c6b5" />
    </g>
  ),
  list: (
    <g>
      <path d="M2 2h36v36H2z" fill="#f2f2f0" />
      <path d="M2 2h36v7H2zM2 16h36v7H2zM2 30h36v8H2z" fill="#b9c9b8" />
    </g>
  ),
  palette: (
    <g>
      <path d="M1 1h38v38H1z" fill="#f2f2f0" />
      <path d="M5 5h8v8H5z" fill="#c01818" />
      <path d="M16 5h8v8h-8z" fill="#e06a10" />
      <path d="M27 5h8v8h-8z" fill="#e39a18" />
      <path d="M5 16h8v8H5z" fill="#124a8c" />
      <path d="M16 16h8v8h-8z" fill="#56b41a" />
      <path d="M27 16h8v8h-8z" fill="#5c86c8" />
      <path d="M5 27h8v8H5z" fill="#111" />
      <path d="M16 27h8v8h-8z" fill="#888" />
      <path d="M27 27h8v8h-8z" fill="#ddd" />
    </g>
  ),
  shapesList: (
    <g>
      <path d="M2 2h36v36H2z" fill="#333" stroke="#a5a5a2" strokeWidth="3" />
      <path d="M8 8h9v6H8zM24 8h9v6h-9zM9 18h9l-2 6H7zM28 17l5 7H23zM8 28h9v6H8zM24 28h9v6h-9z" fill="#c4c4c0" />
    </g>
  ),
  windows: (
    <g>
      <path d="M1 2h38v36H1z" fill="#e4e4e2" />
      <path d="M1 2h38v5H1z" fill="#9db0a0" />
      <path d="M7 12h15v9H7zM18 25h15v9H18z" fill="#eee" stroke="#111" strokeWidth="3" />
    </g>
  ),
  note: (
    <g>
      <path d="M2 1h36v24L26 39H2z" fill="#f0d34a" />
      <path d="M38 25H26v14z" fill="#b58f10" />
      <path d="M8 10h24M8 16h24M8 22h14" stroke="#222" strokeWidth="2.5" />
    </g>
  ),
  image: (
    <g>
      <path d="M2 1h34v34H2z" fill="#4f9adf" stroke="#d8d8d8" strokeWidth="2" />
      <circle cx="11" cy="11" r="5" fill="#f2d41c" />
      <path d="M3 34l8-12 5 6 8-14 11 17v3z" fill="#5fbfa8" />
      <path d="M32 24v16M24 32h16" stroke="#000" strokeWidth="7" />
      <path d="M32 26v12M26 32h12" stroke="#fff" strokeWidth="3" />
    </g>
  ),
  crate: (
    <g>
      <path d="M6 12h32v20l-30 4z" fill="#c98532" />
      <path d="M1 13L12 4h26v9l-28 1z" fill="#e6a855" stroke="#7c4a10" />
    </g>
  ),

  /* playbar */
  toStart: <path d="M3 7h5v26H3zM22 7v26L10 20zM37 7v26L25 20z" fill="#eef0ec" stroke="#26262e" strokeWidth="1.500" />,
  playBack: <path d="M29 5v30L11 20z" fill="#eef0ec" stroke="#26262e" strokeWidth="1.500" />,
  stop: <rect x="8" y="8" width="24" height="24" fill="#dfe3dd" stroke="#3a4a5c" strokeWidth="2" />,
  play: <path d="M11 5v30l18-15z" fill="#eef0ec" stroke="#26262e" strokeWidth="1.500" />,
  toEnd: <path d="M37 7h-5v26h5zM18 7v26l12-13zM3 7v26l12-13z" fill="#eef0ec" stroke="#26262e" strokeWidth="1.500" />,
  stepBack: <path d="M18 9v22L6 20zM22 8h7v24h-7z" fill="#eef0ec" stroke="#26262e" />,
  stepFwd: <path d="M22 9v22l12-11zM11 8h7v24h-7z" fill="#eef0ec" stroke="#26262e" />,
  flipbook: (
    <g>
      <path d="M7 3h25v30H7z" fill="#e8e8e6" stroke="#26262e" strokeWidth="2" />
      <path d="M8 4h23v6H8z" fill="#9a9a98" />
      <path d="M16 12l17 18h-8l-4 9z" fill="#fff" stroke="#111" strokeWidth="1.500" />
    </g>
  ),
  speaker: (
    <g>
      <path d="M2 15h6l14-13v36L8 26H2z" fill="#5b6168" stroke="#222" />
      <ellipse cx="25" cy="20" rx="11" ry="18" fill="#1b2026" stroke="#e9e9e9" strokeWidth="3" />
      <ellipse cx="20" cy="20" rx="4" ry="7" fill="#8b959b" />
    </g>
  ),
  loop: <path d="M2 20L8 4l4 5c14-6 27 4 27 19v8H3v-8h26c0-9-6-13-12-11l4 6z" fill="#e9e9e9" stroke="#111" strokeWidth="2" />,
  clock: (
    <g fill="none" stroke="#e9e9e9">
      <circle cx="20" cy="20" r="15" stroke="#23233a" strokeWidth="5" />
      <circle cx="20" cy="20" r="18" strokeWidth="2" />
      <circle cx="20" cy="20" r="12" strokeWidth="3" />
      <path d="M20 14v12M20 21h6" strokeWidth="3" />
    </g>
  ),
  ticks: (
    <g fill="none">
      <path d="M2 11h8v20M30 31V11h8M4 11v20M37 11v20" stroke="#23233a" strokeWidth="4" />
      <path d="M4 11v20M10 11v20M16 11v8M20 14v12M25 11v8M30 11v20M37 11v20" stroke="#c9cfc5" strokeWidth="2" />
    </g>
  ),
  scrub: (
    <g>
      <path d="M13 5v12l-8-6zM27 5v12l8-6z" fill="none" stroke="#2c2c44" strokeWidth="2" />
      <path d="M5 25h30" stroke="#d8d8d8" strokeWidth="4" />
      <circle cx="22" cy="25" r="6" fill="#eef2ec" stroke="#444" />
    </g>
  ),
  keyPrev: (
    <g>
      <path d="M6 8h5v24H6z" fill="#4c6a3a" />
      <path d="M31 9v22L16 20z" fill="#777" />
    </g>
  ),
  keyNext: (
    <g>
      <path d="M34 8h-5v24h5z" fill="#4c6a3a" />
      <path d="M9 9v22l15-11z" fill="#777" />
    </g>
  ),
  key: (
    <g fill="none" stroke="#777" strokeWidth="4">
      <circle cx="26" cy="12" r="7" />
      <path d="M22 17L8 36M11 30l6 5M15 25l5 4" />
    </g>
  ),
  channelSync: (
    <g>
      <path d="M2 2h32v35H2z" fill="#8b8b8b" />
      <path d="M2 12h7v6H2z" fill="#c01818" />
      <path d="M2 18h7v6H2z" fill="#56b41a" />
      <path d="M2 24h7v6H2z" fill="#5c86c8" />
      <path d="M2 30h7v6H2z" fill="#56b41a" />
      <g fill="none" strokeLinecap="square">
        <path d="M34 15c-3-9-17-8-17 2 0 4 2 4 5 4M16 25c3 9 19 7 19-3 0-3-2-4-5-4" stroke="#111" strokeWidth="7" />
        <path d="M34 15c-3-9-17-8-17 2 0 4 2 4 5 4M16 25c3 9 19 7 19-3 0-3-2-4-5-4" stroke="#fff" strokeWidth="4" />
      </g>
      <path d="M38 8v11H28zM13 33V22h10z" fill="#fff" stroke="#111" />
    </g>
  ),
  wave: (
    <g fill="none" strokeWidth="2.500">
      <path d="M1 1h38v38H1z" fill="#000" stroke="none" />
      <path d="M2 20h36" stroke="#ddd" />
      <path d="M2 20c6 0 6 14 11 14s8-29 14-29 6 15 11 15" stroke="#5d8fd6" />
      <path d="M2 20c8 0 4-8 11-8s6 13 14 13 6-5 11-5" stroke="#ef9a2c" />
    </g>
  ),
  brain: (
    <g>
      <path d="M8 9c6-9 22-8 28 2 4 8 0 18-6 18-2 8-6 9-9 7-4 1-8-4-12-8-8-4-8-14-1-19z" fill="#d6d6d2" stroke="#777" />
      <path d="M8 15c5-4 9 3 5 8M16 6c5 4 1 9 5 13M25 6c-3 6 6 7 3 14M7 24c6-2 8 2 14 0M22 33c-2-6 6-6 8-5M33 12c-3 3 3 6-1 10" fill="none" stroke="#8b8b86" strokeWidth="1.500" />
    </g>
  ),
  refresh: (
    <g fill="none" stroke="#7b7b7b" strokeWidth="5">
      <path d="M8 16c3-11 17-12 23-6M32 24c-3 11-17 12-23 6" />
      <path d="M35 3v12H24zM5 37V25h11z" fill="#7b7b7b" stroke="none" />
    </g>
  ),
  plus: <path d="M16 2h8v14h14v8H24v14h-8V24H2v-8h14z" fill="#e6e6e6" />,
}

function Icon({ name, className = "size-10", caret }) {
  return (
    <svg viewBox="0 0 40 40" className={clsx("shrink-0 overflow-visible", className)} aria-hidden="true">
      {icons[name]}
      {caret === "down" && <path d="M27 33h13l-6.500 8z" fill="#8c8c8c" stroke="#333" strokeWidth="0.500" />}
      {caret === "right" && <path d="M35 30v12l7-6z" fill="#8c8c8c" stroke="#333" strokeWidth="0.500" />}
    </svg>
  )
}

function Tri({ dir = "down", className = "w-3", color = "#e4e4e4" }) {
  const d = { down: "M0 1h12L6 12z", up: "M6 0l6 11H0z", left: "M11 0v12L0 6z", right: "M1 0l11 6L1 12z" }[dir]
  return (
    <svg viewBox="0 0 12 12" preserveAspectRatio="none" className={clsx("shrink-0", className)} aria-hidden="true">
      <path d={d} fill={color} />
    </svg>
  )
}

/* ---------- shelves ---------- */

const leftTabs = ["Create", "Modify", "Model", "Polygon", "Deform", "Texture", "Rigging", "Characters", "Constraints", "Hair Utils", "Guide Process", "Terrain FX", "Simple FX", "Volume", "Redshift"]
const rightTabs = ["Lights and Cameras", "Collisions", "Particles", "Grains", "Vellum", "Rigid Bodies", "Particle Fluids", "Viscous Fluids", "Oceans", "Pyro FX", "FEM", "Wires", "Crowds", "Drive Simulation"]

const leftTools = [
  ["box", "Box"],
  ["sphere", "Sphere"],
  ["tube", "Tube"],
  ["torus", "Torus"],
  ["grid", "Grid"],
  ["null", "Null"],
  ["line", "Line"],
  ["circle", "Circle"],
  ["bezier", "Curve Bezier"],
  ["draw", "Draw Curve"],
  ["path", "Path"],
  ["spray", "Spray Paint"],
  ["font", "Font"],
  ["platonic", "Platonic\nSolids"],
  ["lsystem", "L-System"],
  ["metaball", "Metaball"],
  ["file", "File"],
  ["spiral", "Spiral"],
  ["helix", "Helix"],
]

const rightTools = [
  ["camera", "Camera"],
  ["pointlight", "Point Light"],
  ["spotlight", "Spot Light"],
  ["arealight", "Area Light"],
  ["geolight", "Geometry\nLight"],
  ["fire", "Volume Light"],
  ["distant", "Distant Light"],
  ["environment", "Environment\nLight"],
  ["sky", "Sky Light"],
  ["gi", "GI Light"],
  ["caustic", "Caustic\nLight"],
  ["portal", "Portal Light"],
  ["ambient", "Ambient Light"],
  ["stereo", "Stereo\nCamera"],
  ["vr", "VR Camera"],
]

function ShelfTool({ icon, label }) {
  const tall = label.includes("\n")
  return (
    <button className={clsx("flex h-[78px] shrink-0 flex-col items-center pt-1", tall ? "w-[131px]" : "min-w-[82px] px-[10px]")}>
      <Icon name={icon} className="size-[41px]" />
      <span className={clsx("whitespace-pre text-center text-[17px] leading-[18px]", tall ? "-mt-1" : "mt-[6px]")}>{label}</span>
    </button>
  )
}

function Shelf({ tabs, tools, className, trailing }) {
  return (
    <div className={clsx("flex min-w-0 flex-col", className)}>
      <div className="flex h-[34px] items-stretch bg-[#2d2d2d]">
        {tabs.map((t, i) => (
          <button
            key={t}
            className={clsx(
              "shrink-0 border-r border-black px-4 text-[17px] leading-[32px] whitespace-nowrap",
              i === 0 ? "bg-[#4a4a4a]" : "border-b-2 bg-[#2f2f2f]",
            )}
          >
            {t}
          </button>
        ))}
        <button aria-label="Add shelf" className="flex w-[52px] shrink-0 items-center justify-center border-b border-[#555]">
          <Icon name="plus" className="size-5" />
        </button>
        <div className="flex flex-1 items-center justify-end border-b border-[#555] pr-3">
          <Tri className="h-3 w-3" />
        </div>
      </div>
      <div className="flex h-[78px] items-center bg-linear-to-b from-[#484848] to-[#383838] pl-8">
        {tools.map(([icon, label]) => (
          <ShelfTool key={label} icon={icon} label={label} />
        ))}
        {trailing && <span className="mt-9 shrink-0 text-[17px] leading-[20px] whitespace-nowrap">Sv</span>}
        <div className="flex flex-1 items-center justify-end pr-3">
          <Tri dir="right" className="h-3 w-2" color="#8a8a8a" />
        </div>
      </div>
    </div>
  )
}

/* ---------- pane chrome ---------- */

function PaneTabs({ tabs, italicFirst }) {
  return (
    <div className="flex h-[38px] shrink-0 items-stretch bg-[#2d2d2d]">
      {tabs.map(([t, w], i) => (
        <div
          key={t}
          style={{ width: w }}
          className={clsx(
            "flex shrink-0 items-center justify-between border-r-2 pr-[9px] pl-[13px] text-[19px]",
            i === 0 ? "border-[#4a4a4a] bg-[#4a4a4a]" : "border-b-2 border-[#1f1f1f] bg-[#2f2f2f]",
          )}
        >
          <button className={clsx("whitespace-nowrap", i === 0 && italicFirst && "italic")}>{t}</button>
          <button aria-label={`Close ${t}`} className="size-3">
            <svg viewBox="0 0 12 12" className="size-3">
              <path d="M2 1l8 10M10 1L2 11" stroke="#e4e4e4" strokeWidth="3" />
            </svg>
          </button>
        </div>
      ))}
      <button aria-label="New tab" className="flex w-11 items-center justify-center">
        <Icon name="plus" className="size-5" />
      </button>
      <div className="flex flex-1 items-center justify-end gap-4 pr-3">
        <svg viewBox="0 0 22 24" className="h-6 w-[22px]" aria-hidden="true">
          <path d="M0 0h22v24H0z" fill="#232336" />
          <path d="M2 6h18v15H2z" fill="#dcdcdc" />
        </svg>
        <Tri className="h-3 w-3" />
      </div>
    </div>
  )
}

function PathBar({ extra, wide }) {
  return (
    <div className="flex h-[68px] shrink-0 items-center border-b-2 border-black bg-linear-to-b from-[#4a4a4a] to-[#393939] px-2 pb-[2px]">
      <button aria-label="Back">
        <Icon name="back" className="size-[38px]" caret="right" />
      </button>
      <button aria-label="Forward" className="mx-2">
        <Icon name="forward" className="size-[38px]" />
      </button>
      <div className={clsx("flex h-[47px] min-w-0 flex-1 items-center border border-t-2 border-black bg-[#3c3c3c] pl-[6px] text-[21px] text-[#dedede]", wide ? "ml-2" : "ml-[10px]")}>
        <Icon name="clapper" className="size-[38px]" />
        <a href="#obj" className="ml-[6px]">obj</a>
        <svg viewBox="0 0 12 44" className="mx-[7px] h-[44px] w-3" aria-hidden="true">
          <path d="M1 0l9 22-9 22" fill="none" stroke="#151515" strokeWidth="1.500" />
        </svg>
        <Icon name="geo" className="size-[40px]" />
        <a href="#box2" className="ml-[5px] flex-1">box2</a>
        <div className="flex h-full w-[18px] items-center justify-center bg-linear-to-b from-[#424242] to-[#262626]">
          <Tri className="h-[10px] w-[10px]" color="#8a8a8a" />
        </div>
      </div>
      <div className="ml-4 flex items-center gap-2">
        <Icon name="pin" className="size-[38px]" />
        <Icon name="target" className="size-10" />
      </div>
      {extra && (
        <div className="ml-7 flex items-center gap-2">
          <Icon name="cubeBlue" className="size-10" caret="down" />
          <Icon name="shapes" className="size-10" caret="down" />
          <Icon name="whiteRect" className="size-10" caret="down" />
        </div>
      )}
    </div>
  )
}

function VSplitter({ flip }) {
  return (
    <div className="flex w-[14px] shrink-0 flex-col items-center justify-center gap-8 border-x border-[#2a2a2a] bg-[#484848]">
      <Tri dir={flip ? "left" : "right"} className="h-3 w-[7px]" color="#8a8a8a" />
      <div className="h-10 w-[6px] border-x-2 border-dotted border-[#777]" />
      <Tri dir="right" className="h-3 w-[7px]" color="#8a8a8a" />
    </div>
  )
}

/* ---------- viewport scene ---------- */

// Ground plane projection, given by the image of four lattice points.
const quad = [[700, 794], [1107, 1059], [1479, 926], [1038, 704]]

function makeProjection([[x0, y0], [x1, y1], [x2, y2], [x3, y3]]) {
  const dx1 = x1 - x2, dx2 = x3 - x2, sx = x0 - x1 + x2 - x3
  const dy1 = y1 - y2, dy2 = y3 - y2, sy = y0 - y1 + y2 - y3
  const den = dx1 * dy2 - dx2 * dy1
  const g = (sx * dy2 - dx2 * sy) / den
  const h = (dx1 * sy - sx * dy1) / den
  const a = x1 - x0 + g * x1, b = x3 - x0 + h * x3
  const d = y1 - y0 + g * y1, e = y3 - y0 + h * y3
  return (i, j) => {
    const u = i / 5, v = j / 3
    const w = g * u + h * v + 1
    return [(a * u + b * v + x0) / w, (d * u + e * v + y0) / w, w]
  }
}

const project = makeProjection(quad)
const fmt = ([x, y]) => `${x.toFixed(1)} ${y.toFixed(1)}`

function gridLine(fixed, along, reach) {
  const at = (t) => (along === "u" ? project(t, fixed) : project(fixed, t))
  let lo = -reach, hi = reach
  const wLo = at(lo)[2], wHi = at(hi)[2], near = 0.25
  if (wLo < near && wHi < near) return ""
  const cut = lo + ((near - wLo) / (wHi - wLo)) * (hi - lo)
  if (wLo < near) lo = cut
  if (wHi < near) hi = cut
  return `M${fmt(at(lo))}L${fmt(at(hi))}`
}

function gridPath(step, reach, skip) {
  let d = ""
  const n = Math.round(reach / step)
  for (let k = -n; k <= n; k++) {
    if (skip && k % skip === 0) continue
    d += gridLine(k * step + 0.4, "u", reach) + gridLine(k * step + 0.4, "v", reach)
  }
  return d
}

const UNIT = 0.91
const minorGrid = gridPath(UNIT / 5, 50, 5)
const majorGrid = gridPath(UNIT, 90)

const tiles = [
  [0, 3], [0, 2], [0, 1], [0, 0],
  [1, 4], [1, 3], [1, 2], [1, 1], [1, 0], [1, -1],
  [2, 4], [2, 3], [2, 0], [2, -1],
  [3, 4], [3, 3], [3, 0], [3, -1],
  [4, 4], [4, 3], [4, 2], [4, 1], [4, 0], [4, -1],
  [5, 3], [5, 2], [5, 1], [5, 0],
]

function Tile({ i, j }) {
  const s = 0.86
  const top = project(i, j), left = project(i, j - s), right = project(i + s, j), front = project(i + s, j - s)
  const drop = ([x, y, w]) => [x, y + 10 / w]
  return (
    <g>
      <path d={`M${fmt(top)}L${fmt(right)}L${fmt(drop(right))}L${fmt(drop(front))}L${fmt(drop(left))}L${fmt(left)}Z`} fill="#000" />
      <path d={`M${fmt(left)}L${fmt(front)}L${fmt(right)}M${fmt(front)}L${fmt(drop(front))}`} fill="none" stroke="#1c1e1f" strokeWidth="1.500" />
      <path d={`M${fmt(drop(left))}L${fmt(drop(front))}L${fmt(drop(right))}`} fill="none" stroke="#3b4449" strokeWidth="2" strokeDasharray="3 20" />
    </g>
  )
}

// Geodesic sphere, every icosahedron face split into n * n triangles.
function geodesic(n, cx, cy, r, maxY) {
  const p = (1 + Math.sqrt(5)) / 2
  const v = [[-1, p, 0], [1, p, 0], [-1, -p, 0], [1, -p, 0], [0, -1, p], [0, 1, p], [0, -1, -p], [0, 1, -p], [p, 0, -1], [p, 0, 1], [-p, 0, -1], [-p, 0, 1]]
  const f = [[0, 11, 5], [0, 5, 1], [0, 1, 7], [0, 7, 10], [0, 10, 11], [1, 5, 9], [5, 11, 4], [11, 10, 2], [10, 7, 6], [7, 1, 8], [3, 9, 4], [3, 4, 2], [3, 2, 6], [3, 6, 8], [3, 8, 9], [4, 9, 5], [2, 4, 11], [6, 2, 10], [8, 6, 7], [9, 8, 1]]
  const place = ([x, y, z]) => {
    const l = Math.hypot(x, y, z)
    x /= l; y /= l; z /= l
    const x1 = x * Math.cos(0.7) + z * Math.sin(0.7), z1 = -x * Math.sin(0.7) + z * Math.cos(0.7)
    const y1 = y * Math.cos(0.55) - z1 * Math.sin(0.55)
    return [cx + r * x1, cy - r * y1]
  }
  let d = ""
  const edge = (a, b) => {
    if (a[1] < maxY && b[1] < maxY) d += `M${fmt(a)}L${fmt(b)}`
  }
  for (const [a, b, c] of f) {
    const at = (s, t) => place([0, 1, 2].map((k) => (v[a][k] * (n - s - t) + v[b][k] * s + v[c][k] * t) / n))
    for (let s = 0; s < n; s++)
      for (let t = 0; t < n - s; t++) {
        const q = at(s, t), q1 = at(s + 1, t), q2 = at(s, t + 1)
        edge(q, q1)
        edge(q1, q2)
        edge(q2, q)
      }
  }
  return d
}

const sphereAll = geodesic(8, 1064, 897, 335, 9999)
const sphereUpper = geodesic(8, 1064, 897, 335, 1010)

function Scene() {
  return (
    <svg viewBox="0 0 2292 1707" preserveAspectRatio="xMidYMid slice" className="absolute inset-0 h-full w-full">
      <defs>
        <linearGradient id="backdrop" x1="0" y1="0" x2="0" y2="1">
          <stop offset="0" stopColor="#647b87" />
          <stop offset="1" stopColor="#bfc8c8" />
        </linearGradient>
        <linearGradient id="fade" gradientUnits="userSpaceOnUse" x1="0" y1="0" x2="0" y2="1707">
          <stop offset="0" stopColor="#4f6472" stopOpacity="0.040" />
          <stop offset="0.250" stopColor="#52666f" stopOpacity="0.160" />
          <stop offset="0.500" stopColor="#5d6f78" stopOpacity="0.300" />
          <stop offset="1" stopColor="#78868c" stopOpacity="0.500" />
        </linearGradient>
      </defs>
      <path d="M0 0h2292v1707H0z" fill="url(#backdrop)" />
      <path d={minorGrid} stroke="url(#fade)" strokeWidth="1" fill="none" />
      <path d={majorGrid} stroke="url(#fade)" strokeWidth="3" fill="none" />
      <path d={sphereAll} stroke="#4a5558" strokeOpacity="0.450" strokeWidth="1" fill="none" />
      {tiles.map(([i, j]) => (
        <Tile key={`${i},${j}`} i={i} j={j} />
      ))}
      <path d={sphereUpper} stroke="#5a6264" strokeOpacity="0.170" strokeWidth="1" fill="none" />
    </svg>
  )
}

function ToolButton({ name, active, caret, className = "h-14" }) {
  return (
    <button
      aria-label={name}
      className={clsx("flex shrink-0 items-center justify-center", className, active && "border border-[#555] border-l-[#263547] bg-linear-to-b from-[#5a7390] to-[#6f89a6]")}
    >
      <Icon name={name} className="size-11" caret={caret && "right"} />
    </button>
  )
}

function LeftTools() {
  return (
    <div className="flex w-[68px] shrink-0 flex-col bg-[#3a3a3a]">
      <div className="flex h-5 shrink-0 items-center border-b-2 border-black bg-linear-to-b from-[#555] to-[#3a3a3a] pl-1">
        <Tri dir="left" className="h-[10px] w-3" color="#000" />
      </div>
      <div className="mx-[7px] mt-[11px] flex flex-col border-2 border-[#222] bg-[#444]">
        <ToolButton name="objSelect" caret className="h-12" />
        <ToolButton name="primSelect" active caret className="h-12" />
        <ToolButton name="cubeYellow" caret className="h-12" />
      </div>
      <div className="mt-3 flex flex-col border-t border-[#4c4c4c] px-[6px] pt-2">
        <ToolButton name="cursor" caret />
        <ToolButton name="secure" active />
        <ToolButton name="move" />
        <ToolButton name="rotate" />
        <ToolButton name="scale" />
        <ToolButton name="pose" />
        <ToolButton name="handles" caret />
      </div>
      <div className="mt-2 flex flex-col border-t border-[#4c4c4c] px-[6px] pt-2">
        <ToolButton name="snapGrid" caret />
        <ToolButton name="snapCurve" caret />
        <ToolButton name="snapPoint" caret />
        <ToolButton name="snap" caret />
      </div>
      <div className="mt-2 flex flex-col border-t border-[#4c4c4c] px-[6px] pt-2">
        <ToolButton name="cameraBig" active caret />
        <ToolButton name="globe" />
        <ToolButton name="lens" caret />
      </div>
      <div className="mt-auto flex flex-col items-center gap-3 pb-3">
        <Icon name="book" className="size-10" caret="right" />
        <Icon name="reel" className="size-10" caret="right" />
      </div>
    </div>
  )
}

const displayTop = [
  ["plane", 1, 1], ["planeC", 0, 1], ["lock"], ["bulbX"], ["headlight", 0, 1], ["bulb", 1, 1],
  ["bulbPlus", 0, 1], ["bulbFloor", 0, 1], ["checker", 1, 1], ["glasses", 0, 1], ["glassesPlay", 0, 1],
]
const displayMid = [
  ["dot"], ["pointNormal"], ["trail"], ["pointNum"], ["primNormal"], ["primNum"], ["hull"],
  ["ghost", 1], ["uv", 1, 1], ["diamond"], ["green"], ["tripod"], ["overlay"], ["landscape", 1, 1],
]

function DisplayGroup({ items, className }) {
  return (
    <div className={clsx("flex flex-col gap-[2px] px-1", className)}>
      {items.map(([name, active, caret]) => (
        <button
          key={name}
          aria-label={name}
          className={clsx("flex h-12 items-center justify-center", active && "border border-[#555] border-l-[#263547] bg-linear-to-b from-[#4f6b88] to-[#6f8fb0]")}
        >
          <Icon name={name} className="size-[38px]" caret={caret && "right"} />
        </button>
      ))}
    </div>
  )
}

function DisplayTools() {
  return (
    <div className="flex w-[53px] shrink-0 flex-col bg-[#3a3a3a]">
      <div className="flex h-5 shrink-0 items-center justify-end border-b-2 border-black bg-linear-to-b from-[#555] to-[#3a3a3a] pr-1">
        <Tri dir="right" className="h-[10px] w-3" color="#000" />
      </div>
      <DisplayGroup items={displayTop} className="pt-1" />
      <DisplayGroup items={displayMid} className="border-t border-[#555] pt-[6px]" />
      <DisplayGroup items={[["marker", 1, 1]]} className="mt-3 border-t border-[#555] pt-3" />
      <DisplayGroup items={[["info"], ["quad", 1], ["eye", 0, 1]]} className="mt-auto border-t border-[#555] pt-1 pb-[2px]" />
    </div>
  )
}

function ViewToolbar() {
  const sep = <div className="mx-2 h-12 w-px bg-[#4c4c4c]" />
  return (
    <div className="flex h-[64px] shrink-0 items-center border-t border-b-2 border-t-[#5a5a5a] border-b-black bg-[#2e2e2e]">
      <div className="flex h-full w-5 items-start justify-center border-r-2 border-black bg-[#444] pt-1">
        <Tri dir="up" className="h-3 w-3" color="#000" />
      </div>
      <div className="flex flex-1 pl-2">
        <Icon name="dots9" className="size-9" caret="down" />
      </div>
      <div className="mr-11 flex items-center">
        <div className="mr-2 flex gap-6">
          <Icon name="orbit" className="size-10" caret="down" />
          <Icon name="pan" className="size-10" caret="down" />
          <Icon name="dolly" className="size-10" caret="down" />
        </div>
        {sep}
        <button aria-label="Camera" className="flex h-12 w-[46px] items-center justify-center bg-linear-to-b from-[#4f6b88] to-[#6f8fb0]">
          <Icon name="cameraLight" className="size-10" />
        </button>
        <Icon name="region" className="ml-2 size-10" />
        {sep}
        <Icon name="forbidden" className="mx-[6px] size-10" />
        {sep}
        <Icon name="bug" className="mx-1 size-10" />
        <Icon name="gearSheet" className="ml-1 size-[38px]" />
      </div>
      <div className="flex flex-1 items-center justify-end gap-2 pr-2">
        <Icon name="users" className="size-10" caret="down" />
        <Icon name="help" className="size-9" />
      </div>
    </div>
  )
}

function Viewport() {
  const pill = "flex h-9 items-center gap-[2px] rounded-full border-2 border-[#aab4b8] bg-[#4d5a61] px-[14px] text-[20px] text-[#e9eded]"
  return (
    <div className="relative min-w-0 flex-1 overflow-hidden">
      <Scene />
      <div className="absolute top-5 left-6 flex items-center gap-[17px]">
        <Icon name="cameraBig" className="size-[50px]" />
        <span className="font-['Open_Sans',sans-serif] text-[28px] font-bold text-white [text-shadow:2px_2px_3px_#333]">View</span>
      </div>
      <div className="absolute top-3 right-2 flex gap-3">
        <button className={pill}>Persp<span>-</span></button>
        <button className={pill}>No cam<span>-</span></button>
      </div>
      <svg viewBox="0 0 40 50" className="absolute bottom-3 left-5 h-[50px] w-10 overflow-visible text-[20px]" aria-hidden="true">
        <path d="M4 40l14-8" stroke="#e11" strokeWidth="1.500" />
        <path d="M4 40l8 7" stroke="#11e" strokeWidth="1.500" />
        <path d="M4 40V14" stroke="#999" />
        <text x="5" y="13" fill="#0d0">y</text>
        <text x="20" y="30" fill="#e11">x</text>
        <text x="17" y="44" fill="#11e">z</text>
      </svg>
      <p className="absolute right-0 bottom-[18px] left-[168px] text-[21px] leading-[24px] whitespace-nowrap text-[#1c1c1c]">
        Left mouse tumbles. Middle pans. Right dollies. Ctrl+Alt+Left box-zooms. Ctrl+Right zooms. Spacebar-Ctrl-Left tilts. Hold L for alternate tumble, dolly, and zoom. M or Alt+M for First Person Navigation.
      </p>
      <span className="absolute right-[26px] bottom-5 text-[21px] leading-[24px] text-[#f0f01e]">Indie Edition</span>
    </div>
  )
}

/* ---------- parameters ---------- */

function Arrows({ className }) {
  return (
    <div className={clsx("pointer-events-none flex flex-col items-center justify-center gap-[3px] bg-[#2e2e2e]", className)}>
      <Tri dir="up" className="h-[11px] w-[11px]" color="#8c8c8c" />
      <Tri className="h-[11px] w-[11px]" color="#8c8c8c" />
    </div>
  )
}

function Select({ value, label, className, textClass }) {
  return (
    <div className={clsx("relative border border-black/70 bg-linear-to-b from-[#555] to-[#3a3a3a]", className)}>
      <select aria-label={label} defaultValue={value} className={clsx("h-full w-full appearance-none bg-transparent text-[21px]", textClass || "pl-[26px]")}>
        <option>{value}</option>
      </select>
      <Arrows className="absolute inset-y-0 right-0 w-[22px]" />
    </div>
  )
}

function Row({ label, dim, children, className = "h-[37px]", lead }) {
  return (
    <div className={clsx("flex items-center", className)}>
      <div className="flex w-[305px] shrink-0 items-center justify-between pr-6 pl-[54px]">
        {lead || <span />}
        <span className={clsx("text-[21px] leading-[30px] whitespace-nowrap", dim && "text-[#7b7b7b]")}>{label}</span>
      </div>
      {children}
    </div>
  )
}

function Fields({ name, values, bold = [], dim }) {
  return (
    <div className="grid min-w-0 flex-1 grid-cols-3 gap-[3px]">
      {values.map((v, i) => (
        <input
          key={i}
          aria-label={`${name} ${i + 1}`}
          defaultValue={v}
          disabled={dim}
          className={clsx(
            "h-[37px] w-full min-w-0 border-2 px-[3px] text-[27px] leading-none",
            MONO,
            dim ? "border-[#333] bg-[#303030] text-[#555]" : "border-[#2b2b2b] bg-[#131313] text-[#f2f2f2]",
            bold.includes(i) && "font-bold text-white",
          )}
        />
      ))}
    </div>
  )
}

function Check({ label, checked, dim }) {
  return (
    <Row className="h-[37px]">
      <label className={clsx("flex items-center gap-4 text-[21px] leading-[30px]", dim && "text-[#7b7b7b]")}>
        <span className="relative flex size-[26px]">
          <input
            type="checkbox"
            defaultChecked={checked}
            disabled={dim}
            className={clsx("peer size-[26px] appearance-none border-2", dim ? "border-[#363636] bg-[#333]" : "border-[#2b2b2b] bg-[#131313]")}
          />
          <svg viewBox="0 0 26 26" className="pointer-events-none absolute inset-0 hidden peer-checked:block">
            <path d="M3 12l5-1 3 6L21 1l4 0-13 24H9z" fill="#e6e6e6" />
          </svg>
        </span>
        {label}
      </label>
    </Row>
  )
}

function Parameters() {
  return (
    <div className="flex min-h-0 flex-[935] flex-col">
      <PaneTabs tabs={[["box1", 119], ["Take List", 150], ["Performance Monitor", 248]]} italicFirst />
      <PathBar />
      <div className="flex h-[52px] shrink-0 items-center border-b-2 border-black px-2">
        <Icon name="box" className="size-[38px]" caret="down" />
        <label htmlFor="node-name" className="ml-[6px] text-[21px] font-bold">Box</label>
        <input id="node-name" defaultValue="box1" className="mr-3 ml-2 h-10 min-w-0 flex-1 border-2 border-[#2b2b2b] bg-[#131313] px-[3px] text-[22px] text-[#f0f0f0]" />
        <div className="flex items-center gap-[14px]">
          <Icon name="gear" className="size-[38px]" caret="down" />
          <Icon name="brush" className="size-[38px]" caret="down" />
          <Icon name="search" className="size-[38px]" />
          <Icon name="info" className="size-[38px]" />
          <Icon name="help" className="size-[38px]" />
        </div>
      </div>
      <div className="flex flex-col gap-1 pt-1 pr-5">
        <Row label="Primitive Type" className="h-[47px]">
          <Select label="Primitive Type" value="Polygon Mesh" className="h-[47px] w-[203px]" textClass="pl-[26px] font-medium text-[#e4e4e4]" />
        </Row>
        <Row label="Connectivity" className="h-[47px]">
          <Select label="Connectivity" value="Quadrilaterals" className="h-[47px] w-[272px]" />
        </Row>
        <Check label="Consolidate Corner Points" checked />
        <Row label="Size"><Fields name="Size" values={["1", "0.1", "1"]} bold={[1]} /></Row>
        <Row label="Center"><Fields name="Center" values={["0", "0", "0"]} /></Row>
        <Row label="Rotate"><Fields name="Rotate" values={["90", "0", "0"]} bold={[0]} /></Row>
        <Row label="Uniform Scale" className="h-[43px]">
          <input aria-label="Uniform Scale" defaultValue="0.96" className={clsx("h-[43px] w-[149px] border-2 border-[#2b2b2b] bg-[#131313] px-[3px] text-[27px] font-bold text-white", MONO)} />
          <input
            type="range"
            aria-label="Uniform Scale slider"
            min="0"
            max="10"
            step="0.01"
            defaultValue="0.96"
            className="ml-1 h-[42px] min-w-0 flex-1 appearance-none bg-[linear-gradient(to_right,#0b57a8_9%,#050505_9%)] bg-[length:100%_5px] bg-center bg-no-repeat [&::-webkit-slider-thumb]:h-[42px] [&::-webkit-slider-thumb]:w-[5px] [&::-webkit-slider-thumb]:appearance-none [&::-webkit-slider-thumb]:border [&::-webkit-slider-thumb]:border-[#222] [&::-webkit-slider-thumb]:bg-[#999]"
          />
        </Row>
        <Row label="Axis Divisions"><Fields name="Axis Divisions" values={["2", "2", "2"]} bold={[0, 1, 2]} /></Row>
        <Row label="Axis Orders" dim><Fields name="Axis Orders" values={["4", "4", "4"]} dim /></Row>
        <Row
          label="Divisions"
          dim
          lead={<input type="checkbox" aria-label="Use divisions" disabled className="-ml-5 size-[27px] appearance-none border-2 border-[#363636] bg-[#333]" />}
        >
          <Fields name="Divisions" values={["3", "3", "3"]} dim />
        </Row>
        <Check label="Enforcement Bars" dim />
        <Check label="Oriented Bounding Box (points only)" dim />
        <Check label="Add Vertex Normals" />
      </div>
    </div>
  )
}

/* ---------- network ---------- */

const nodes = [
  { name: "sphere1", x: 647, y: 30, icon: "sphere", flag: "#df80dc", time: true },
  { name: "scatter1", x: 647, y: 120, icon: "scatter", time: true },
  { name: "color1", x: 647, y: 211, icon: "tubeColor", time: true, lock: true },
  { name: "attribcreate1", x: 647, y: 312, icon: "attrib", slant: true, time: true, note: "pscale" },
  { name: "grid1", x: 402, y: 170, icon: "plate" },
  { name: "color2", x: 402, y: 292, icon: "tubeColor", lock: true },
  { name: "box1", x: 114, y: 340, icon: "box", selected: true },
  { name: "transform1", x: 114, y: 430, icon: "xform" },
  { name: "attribtransfer1", x: 522, y: 466, icon: "transfer", slant: true, two: true, time: true, note: "pscale" },
  { name: "visualize1", x: 522, y: 619, icon: "visualize", time: true, lock: true },
  { name: "copytopoints1", x: 330, y: 709, icon: "copy", fill: "#ffa51e", two: true, time: true, display: true },
]

const nodeIcons = {
  plate: <path d="M7 18h26l6 14H1z" fill="#a9b6b6" stroke="#5f6a6c" strokeWidth="2" />,
  scatter: <path d="M20 8l6 6 9 6-9 5-6 7-6-7-9-5 9-6z" fill="#b9aa55" stroke="#6b5f20" />,
  tubeColor: (
    <g>
      <path d="M6 2l12 3 17 24-10 8z" fill="#e6e6e6" stroke="#6a6a6a" />
      <path d="M6 2l12 3 7 10-12 5z" fill="#4a7fb6" />
      <path d="M14 20l11-5 3 4-11 6z" fill="#f4f4f4" />
    </g>
  ),
  attrib: (
    <g>
      <path d="M14 5h20v16H14z" fill="#dfe5d8" stroke="#555" strokeWidth="2" />
      <path d="M24 8v10M19 13h10" stroke="#224" strokeWidth="3" />
      <path d="M20 21L10 34" stroke="#555" strokeWidth="4" />
      <circle cx="9" cy="33" r="4" fill="#cdd4c8" stroke="#555" />
    </g>
  ),
  xform: (
    <g>
      <path d="M2 10l9 3 6-4h8l6 4 8-3v10l-4 4 4 10-12 2-7-8-7 8-11-2 3-10-3-4z" fill="#2d6096" />
      <path d="M12 10l8-4 9 4v10l-9 4-8-4z" fill="#b8c2c8" stroke="#67737b" />
    </g>
  ),
  transfer: (
    <g>
      <path d="M4 14l14-6 14 12-12 18-14-8z" fill="#e9e9e9" stroke="#555" />
      <path d="M12 10l8 6 4 18-6-4z" fill="#e38a20" />
      <path d="M26 0h12v11H26z" fill="#d9541a" stroke="#777" />
    </g>
  ),
  visualize: (
    <g>
      <path d="M4 22C0 8 30 2 37 16c0 12-10 14-16 12-8 6-17-1-17-6z" fill="#7b6fc4" />
      <path d="M9 20c0-11 20-11 23 0-4 9-19 9-23 0z" fill="#56c4a0" />
      <circle cx="21" cy="16" r="6" fill="#e6de4c" />
      <path d="M12 27c6 4 14 3 20-1l-2 9-10 1z" fill="#cf4fa0" />
    </g>
  ),
  copy: (
    <g fill="#d69a3c" stroke="#7d6a4a">
      <path d="M10 10l12-5 10 6v18l-12 8-10-8z" fill="#e9a33a" />
      <circle cx="8" cy="8" r="3" />
      <circle cx="24" cy="4" r="3" />
      <circle cx="34" cy="13" r="3" />
      <circle cx="20" cy="19" r="3" />
      <circle cx="8" cy="27" r="3" />
      <circle cx="20" cy="37" r="3" />
      <circle cx="33" cy="31" r="3" />
    </g>
  ),
}

function NetNode({ name, x, y, icon, flag, fill = "#cbcbcb", slant, selected, two, time, lock, note, display }) {
  const lx = x + (slant ? 63 : 60)
  const body = slant ? `M${x - 44} ${y - 15}h94q4 0 3 4l-7 22q-1 4-5 4h-93q-3 0-2-4l6-22q1-4 4-4z` : `M${x - 47} ${y - 15}h94q4 0 4 4v22q0 4-4 4h-94q-4 0-4-4v-22q0-4 4-4z`
  const line = fill === "#cbcbcb" ? "#8f8f8f" : "#a86a08"
  return (
    <g>
      {selected && <rect x={x - 53} y={y - 18} width="106" height="36" rx="6" fill="#111" stroke="#ffd400" strokeWidth="3" />}
      <path d={body} fill={fill} stroke={line} />
      {flag && <path d={`M${x + 26} ${y - 15}h13l-4 30h-13z`} fill={flag} />}
      {display && <path d={`M${x + 39} ${y - 14}h8q4 0 4 3v22q0 3-4 3h-12z`} fill="#00aef5" />}
      <path d={`M${x - 37} ${y - 15}l-4 30M${x - 23} ${y - 15}l-4 30M${x + 26} ${y - 15}l-4 30M${x + 39} ${y - 15}l-4 30`} stroke={line} />
      <svg x={x - 13} y={y - 13} width="26" height="26" viewBox="0 0 40 40">
        {nodeIcons[icon] || icons[icon]}
      </svg>
      <g fill="#b5b5b5">
        {two ? (
          <>
            <circle cx={x - 21} cy={y - 24} r="5" />
            <circle cx={x + 20} cy={y - 24} r="5" />
          </>
        ) : (
          name !== "grid1" && <circle cx={x} cy={y - 24} r="5" />
        )}
        <circle cx={x} cy={y + 24} r="5" />
      </g>
      <text x={lx} y={y + 7} fontSize="21" fill="#cfcfcf">{name}</text>
      {time && (
        <g fill="none" stroke="#a4e060" strokeWidth="2">
          <circle cx={lx + 12} cy={y + 23} r="5.500" fill="#0c0c0c" />
          <path d={`M${lx + 13} ${y + 20}v4h-3`} strokeWidth="1.500" />
        </g>
      )}
      {lock && (
        <g transform={`translate(${lx + (time ? 28 : 6)} ${y + 16})`}>
          <path d="M3 7V4c0-4 7-4 7 0v3" fill="none" stroke="#5d6a61" strokeWidth="2" />
          <path d="M0 6h13v9H0z" fill="#66756b" />
        </g>
      )}
      {note && <text x={lx} y={y + 53} fontSize="18" fill="#6b9fd8">{note}</text>}
    </g>
  )
}

function Network() {
  return (
    <div className="relative min-h-0 flex-1 overflow-hidden bg-[#303030]">
      <svg className="absolute inset-0 h-full w-full">
        <text x="457" y="64" fontSize="39" fill="#434343">Indie Edition</text>
        <text x="100%" dx="-20" y="73" textAnchor="end" fontSize="45" fontWeight="bold" fill="#505050">Geometry</text>
        <circle cx="647" cy="30" r="48" fill="none" stroke="#74486f" strokeWidth="6" />
        <circle cx="330" cy="709" r="51" fill="#44699f" />
        <circle cx="330" cy="709" r="34" fill="#9a78cf" />
        <g fill="none" stroke="#5583bd" strokeWidth="1.500">
          <path d="M647 54v42" strokeDasharray="3 3" />
          <path d="M647 144v43M402 194v74" />
          <path d="M647 235v53M522 490v105" stroke="#6f88a5" />
          <path d="M114 364v42" stroke="#a5bf78" />
          <path d="M402 316q0 12 8 21l82 92q9 10 9 13" />
          <path d="M647 336q0 14-10 24l-74 58q-21 14-21 24" strokeDasharray="3 3" />
          <path d="M114 454q0 14 9 23l172 188q14 14 14 20" />
          <path d="M522 643q-2 21-15 21H370q-18 0-20 21" strokeDasharray="2 2" />
        </g>
        {nodes.map((n) => (
          <NetNode key={n.name} {...n} />
        ))}
      </svg>
    </div>
  )
}

function NetworkPane() {
  return (
    <div className="flex min-h-0 flex-[929] flex-col">
      <PaneTabs tabs={[["/obj/box2", 158], ["Tree View", 156], ["Material Palette", 204], ["Asset Browser", 190]]} italicFirst />
      <PathBar wide />
      <div className="flex h-[53px] shrink-0 items-center border-b-2 border-black bg-linear-to-b from-[#444] to-[#353535]">
        <div className="flex h-full w-5 items-start justify-center border-r-2 border-[#222] bg-[#484848] pt-1">
          <Tri dir="up" className="h-3 w-3" color="#000" />
        </div>
        <nav className="ml-[51px] flex gap-[30px] text-[23px]">
          {["Add", "Edit", "Go", "View", "Tools", "Layout", "Labs", "Help"].map((m) => (
            <button key={m}>{m}</button>
          ))}
        </nav>
        <div className="ml-[19px] flex flex-1 items-center justify-between">
          {["tools", "tree", "list", "palette", "shapesList", "windows", "note", "image", "crate"].map((n) => (
            <Icon key={n} name={n} className="size-9" />
          ))}
          <Tri dir="right" className="mr-2 h-3 w-2" color="#8a8a8a" />
        </div>
      </div>
      <Network />
    </div>
  )
}

/* ---------- playbar ---------- */

const raised = "flex items-center justify-center border-r border-b-2 border-black/80 bg-linear-to-b from-[#505050] to-[#383838]"
const frames = Array.from({ length: 40 }, (_, i) => (i + 1) * 6)
const pct = (f) => `${((f - 1) / 240) * 100}%`

function NumField({ label, value, dark = true, className }) {
  return (
    <input
      aria-label={label}
      defaultValue={value}
      className={clsx("shrink-0 border-2 border-[#262626] px-[3px] text-[26px] text-[#f2f2f2]", MONO, dark ? "bg-[#131313]" : "bg-[#202020]", className)}
    />
  )
}

function Ruler() {
  return (
    <div className="relative h-[70px] min-w-0 flex-1 text-[19px] text-[#9a9a9a]">
      <div className="absolute inset-x-0 top-[44px] h-[2px] bg-[#a8a8a8]" />
      <span className="absolute -top-px left-[3px] leading-[24px]">1</span>
      {frames.map((f) => (
        <div key={f} style={{ left: pct(f) }} className={clsx("absolute w-[2px] bg-[#8a8a8a]", f % 24 ? "top-[34px] h-5" : "top-[29px] h-[30px]")}>
          {f % 24 === 0 && <span className="absolute -top-[30px] left-0 leading-[24px]">{f === 240 ? "2" : f}</span>}
        </div>
      ))}
      <div style={{ left: pct(11) }} className="absolute top-[4px]">
        <svg viewBox="0 0 48 38" className="-ml-6 h-[38px] w-12">
          <path d="M1 1h46v27H30l-6 9-6-9H1z" fill="#000" stroke="#e8e8e8" strokeWidth="2" />
          <text x="24" y="23" textAnchor="middle" fontSize="22" fill="#fff">11</text>
        </svg>
      </div>
    </div>
  )
}

function Playbar() {
  return (
    <div className="flex h-[141px] shrink-0 border-t-2 border-t-[#585858] bg-[#2e2e2e]">
      <div className="flex w-5 shrink-0 items-end justify-center border-r-2 border-[#1c1c1c] bg-[#444] pb-1">
        <Tri className="h-3 w-3" color="#000" />
      </div>
      <div className="flex min-w-0 flex-1 flex-col pl-[6px]">
        <div className="flex">
          <div className="mt-[16px] flex h-[56px] w-[430px] shrink-0">
            {["toStart", "playBack", "stop", "play", "toEnd"].map((n) => (
              <button key={n} aria-label={n} className={clsx("w-[54px]", n === "stop" ? "flex items-center justify-center bg-linear-to-b from-[#5a7390] to-[#7b95b3]" : raised)}>
                <Icon name={n} className="size-[46px]" />
              </button>
            ))}
            <NumField label="Current frame" value="11" className="ml-1 h-[56px] w-[92px] pb-[6px]" />
            {["stepBack", "stepFwd"].map((n) => (
              <button key={n} aria-label={n} className={clsx("w-[27px]", raised, n === "stepBack" && "ml-[2px]")}>
                <Icon name={n} className="size-6" />
              </button>
            ))}
          </div>
          <Ruler />
        </div>
        <div className="mt-auto flex items-center pb-[7px]">
          <div className="flex h-[47px] w-[430px] shrink-0">
            {[["flipbook"], ["speaker"], ["loop", "down"], ["clock"], ["ticks", "right"], ["scrub"]].map(([n, c]) => (
              <button key={n} aria-label={n} className={clsx("w-[54px]", raised)}>
                <Icon name={n} className="size-[38px]" caret={c} />
              </button>
            ))}
            {["keyPrev", "keyNext"].map((n) => (
              <button key={n} aria-label={n} className={clsx("w-[45px] opacity-60", raised, n === "keyPrev" && "ml-1")}>
                <Icon name={n} className="size-8" />
              </button>
            ))}
          </div>
          <NumField label="Global start" value="1" dark={false} className="h-[43px] w-[86px] pb-1" />
          <NumField label="Range start" value="1" className="ml-[2px] h-[43px] w-[86px] pb-1" />
          <div className="mx-[3px] flex min-w-0 flex-1 items-center">
            <Tri dir="right" className="h-5 w-[10px]" color="#a5a5a5" />
            <div className="h-[10px] flex-1 bg-[#737373]" />
            <Tri dir="left" className="h-5 w-[10px]" color="#a5a5a5" />
          </div>
          <NumField label="Range end" value="240" className="h-[43px] w-[85px] pb-1" />
          <NumField label="Global end" value="240" dark={false} className="ml-[2px] h-[43px] w-[84px] pb-1" />
        </div>
      </div>
      <div className="flex shrink-0 items-center pl-2">
        <button aria-label="Set key" className="flex size-[78px] items-center justify-center rounded-full border-2 border-[#222] bg-[#343434]">
          <Icon name="key" className="size-9" />
        </button>
        <button aria-label="Key options" className={clsx("-ml-1 h-11 w-9", raised)}>
          <Tri className="h-[10px] w-3" color="#8a8a8a" />
        </button>
      </div>
      <div className="ml-[10px] grid shrink-0 grid-cols-[46px_306px] content-start gap-x-[7px] gap-y-1 pt-[17px] pr-2 text-[21px]">
        <button aria-label="Channel sync" className={clsx("h-12", raised)}>
          <Icon name="channelSync" className="size-9" caret="right" />
        </button>
        <button className={clsx("h-12 pr-3 pl-[34px]", raised)}>
          <span className="flex-1 text-left">0 keys, 0/0 channels</span>
          <Tri dir="up" className="h-3 w-[14px]" color="#8a8a8a" />
        </button>
        <button aria-label="Curves" className={clsx("h-12", raised)}>
          <Icon name="wave" className="size-9" />
        </button>
        <Select label="Keying" value="Key All Channels" className="h-12" />
      </div>
    </div>
  )
}

function StatusBar() {
  return (
    <div className="flex h-[51px] shrink-0 justify-end border-t-2 border-black bg-[#191919]">
      <div className="flex w-[51px] items-center justify-center bg-[#3a3a3a]">
        <Icon name="brain" className="size-10" caret="right" />
      </div>
      <Select label="Simulation" value="/obj/box1/solver1/d" className="w-[254px]" textClass="pb-1 pl-[26px]" />
      <button aria-label="Refresh" className="flex w-[55px] items-center justify-center bg-[#353535]">
        <Icon name="refresh" className="size-9" />
      </button>
      <Select label="Update mode" value="Auto Update" className="w-[197px]" textClass="pb-1 pl-[26px]" />
      <div className="w-[47px] rounded-br-2xl bg-[#333]" />
    </div>
  )
}

export default function App() {
  return (
    <div className={clsx("flex h-screen flex-col overflow-hidden bg-[#3a3a3a] text-[#c9c9c9]", SANS)}>
      <Defs />
      <div className="flex shrink-0 border-b border-black">
        <div className="flex w-5 shrink-0 items-start justify-center border-r border-black bg-[#444] pt-1">
          <Tri dir="up" className="h-3 w-3" color="#000" />
        </div>
        <Shelf tabs={leftTabs} tools={leftTools} className="flex-[1782]" />
        <div className="flex w-5 shrink-0 items-center justify-center border-x border-black bg-[#484848]">
          <div className="h-4 w-1 border-x-2 border-dotted border-black" />
        </div>
        <Shelf tabs={rightTabs} tools={rightTools} className="flex-[1762]" trailing />
      </div>
      <div className="flex min-h-0 flex-1">
        <VSplitter />
        <div className="flex min-w-0 flex-[2413] flex-col">
          <PaneTabs tabs={[["Scene View", 168], ["Animation Editor", 215], ["Render View", 178], ["Composite View", 205], ["Motion FX View", 200], ["Geometry Spreadsheet", 260]]} />
          <PathBar extra />
          <ViewToolbar />
          <div className="flex min-h-0 flex-1">
            <LeftTools />
            <Viewport />
            <DisplayTools />
          </div>
        </div>
        <VSplitter flip />
        <div className="flex min-w-0 flex-[1143] flex-col">
          <Parameters />
          <div className="flex h-[14px] shrink-0 items-center justify-center gap-10 border-y border-[#6a6a6a] bg-[#484848]">
            <Tri dir="up" className="h-[7px] w-3" color="#8a8a8a" />
            <div className="h-[6px] w-10 border-y-2 border-dotted border-[#777]" />
            <Tri className="h-[7px] w-3" color="#8a8a8a" />
          </div>
          <NetworkPane />
        </div>
      </div>
      <Playbar />
      <StatusBar />
    </div>
  )
}
